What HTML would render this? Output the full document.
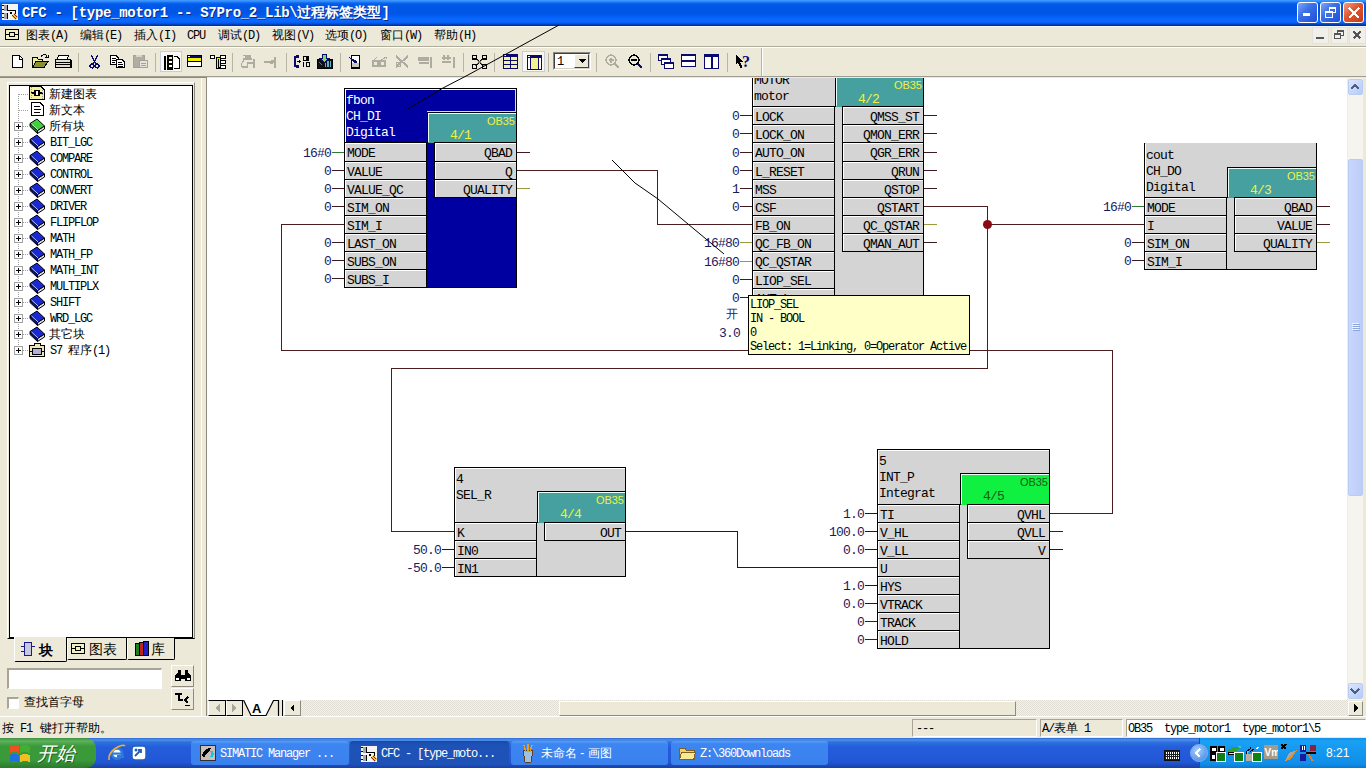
<!DOCTYPE html><html><head><meta charset="utf-8"><style>
*{margin:0;padding:0;box-sizing:border-box}
html,body{width:1366px;height:768px;overflow:hidden;background:#ECE9D8;position:relative}
div{position:absolute}
.m13{font-family:"Liberation Mono",monospace;font-size:13px;line-height:13px;letter-spacing:-0.8px;white-space:pre;color:#000}
.m11{font-family:"Liberation Mono",monospace;font-size:11px;line-height:12px;letter-spacing:-0.6px;white-space:pre;color:#000}
.s12{font-family:"Liberation Sans",sans-serif;font-size:12px;line-height:12px;white-space:pre;color:#000}
.m12{font-family:"Liberation Mono",monospace;font-size:12px;line-height:12px;letter-spacing:-1.2px;white-space:pre;color:#000}
.s11{font-family:"Liberation Sans",sans-serif;font-size:11px;line-height:11px;white-space:pre;color:#000}
</style></head><body>
<div style="left:0;top:0;width:1366px;height:26px;background:linear-gradient(to bottom,#3D95FF 0px,#3D95FF 1px,#0A66EE 3px,#0058E6 5px,#0055E5 13px,#005DF2 16px,#0A68FF 19px,#0A64FC 22px,#0050D8 24px,#003399 25px,#003399 26px)"></div>
<svg style="position:absolute;left:2px;top:4px;" width="16" height="16" viewBox="0 0 16 16" shape-rendering="crispEdges"><rect x="0" y="0" width="16" height="16" fill="#F4F4F0"/><rect x="2" y="1" width="4" height="6" fill="#A8A4B0"/><rect x="2" y="9" width="4" height="6" fill="#A8A4B0"/><path d="M0 1.5 H2 M0 5.5 H2 M0 9.5 H2 M0 13.5 H2" stroke="#000"/><path d="M5.5 1 V6.5 H13.5 V12 M5.5 9 V15" stroke="#000" fill="none"/><path d="M7 7.5 H11 L9 11 Z" fill="#000"/><path d="M9 12 L12 9 L16 13 L13 16 Z" fill="#E8C850"/><path d="M10.5 11.5 L14 15 M12 10 L15.5 13.5" stroke="#8A2000" stroke-width="1.2"/></svg>
<div style="left:22px;top:5px;font-family:'Liberation Mono',monospace;font-weight:bold;font-size:14px;line-height:14px;letter-spacing:-0.3px;color:#fff;white-space:pre;text-shadow:1px 1px 0 #0a2a8a">CFC - [type_motor1 -- S7Pro_2_Lib\<span style="font-family:'Liberation Sans',sans-serif;letter-spacing:0">过程标签类型</span>]</div>
<div style="left:1297px;top:2px;width:21px;height:21px;border:1px solid #fff;border-radius:3px;background:linear-gradient(135deg,#7FA6F8 0%,#3C71E8 40%,#1F4FD8 100%)"></div>
<div style="left:1320px;top:2px;width:21px;height:21px;border:1px solid #fff;border-radius:3px;background:linear-gradient(135deg,#7FA6F8 0%,#3C71E8 40%,#1F4FD8 100%)"></div>
<div style="left:1343px;top:2px;width:21px;height:21px;border:1px solid #fff;border-radius:3px;background:linear-gradient(135deg,#F0A080 0%,#E05530 45%,#C83A18 100%)"></div>
<svg style="position:absolute;left:1303px;top:13px;" width="9" height="4" viewBox="0 0 9 4" shape-rendering="crispEdges"><rect x="0" y="0" width="7" height="3" fill="#fff"/></svg>
<svg style="position:absolute;left:1325px;top:7px;" width="12" height="12" viewBox="0 0 12 12" shape-rendering="crispEdges"><rect x="4.5" y="0.5" width="6" height="5" fill="none" stroke="#fff" stroke-width="1"/><rect x="4" y="0" width="7" height="2" fill="#fff"/><rect x="0.5" y="4.5" width="7" height="6" fill="#3C71E8" stroke="#fff" stroke-width="1"/><rect x="0" y="4" width="8" height="2" fill="#fff"/></svg>
<svg style="position:absolute;left:1347px;top:6px;" width="14" height="14" viewBox="0 0 14 14" shape-rendering="crispEdges"><path d="M2 2 L12 12 M12 2 L2 12" stroke="#fff" stroke-width="2.2"/></svg>
<div style="position:absolute;left:0px;top:26px;width:1366px;height:1px;background:#F4F6FF"></div>
<div style="position:absolute;left:0px;top:46px;width:1366px;height:1px;background:#B0AC9C"></div>
<div style="position:absolute;left:0px;top:47px;width:1366px;height:1px;background:#fff"></div>
<svg style="position:absolute;left:5px;top:29px;" width="15" height="12" viewBox="0 0 15 12" shape-rendering="crispEdges"><rect x="0.5" y="0.5" width="13" height="10" fill="#F0F0C0" stroke="#000"/><rect x="4.5" y="3.5" width="5" height="4" fill="none" stroke="#000"/><path d="M1 5.5 H4 M10 5.5 H13" stroke="#000"/></svg>
<div class="s12" style="left:26px;top:29px">图表</div>
<div class="m12" style="left:50px;top:30px">(A)</div>
<div class="s12" style="left:80px;top:29px">编辑</div>
<div class="m12" style="left:104px;top:30px">(E)</div>
<div class="s12" style="left:134px;top:29px">插入</div>
<div class="m12" style="left:158px;top:30px">(I)</div>
<div class="m12" style="left:187px;top:30px">CPU</div>
<div class="s12" style="left:218px;top:29px">调试</div>
<div class="m12" style="left:242px;top:30px">(D)</div>
<div class="s12" style="left:272px;top:29px">视图</div>
<div class="m12" style="left:296px;top:30px">(V)</div>
<div class="s12" style="left:325px;top:29px">选项</div>
<div class="m12" style="left:349px;top:30px">(O)</div>
<div class="s12" style="left:380px;top:29px">窗口</div>
<div class="m12" style="left:404px;top:30px">(W)</div>
<div class="s12" style="left:434px;top:29px">帮助</div>
<div class="m12" style="left:458px;top:30px">(H)</div>
<div style="position:absolute;left:1312px;top:27px;width:17px;height:17px;background:#F0EFEA;border:1px solid #E4E2D8"></div>
<div style="position:absolute;left:1331px;top:27px;width:17px;height:17px;background:#F0EFEA;border:1px solid #E4E2D8"></div>
<div style="position:absolute;left:1349px;top:27px;width:17px;height:17px;background:#F0EFEA;border:1px solid #E4E2D8"></div>
<div style="position:absolute;left:1316px;top:37px;width:8px;height:2px;background:#555"></div>
<svg style="position:absolute;left:1334px;top:30px;" width="11" height="11" viewBox="0 0 11 11" shape-rendering="crispEdges"><rect x="3.5" y="0.5" width="6" height="5" fill="none" stroke="#555"/><rect x="3" y="0" width="7" height="2" fill="#555"/><rect x="0.5" y="3.5" width="6" height="5" fill="#F0EFEA" stroke="#555"/><rect x="0" y="3" width="7" height="2" fill="#555"/></svg>
<svg style="position:absolute;left:1352px;top:30px;" width="11" height="11" viewBox="0 0 11 11" shape-rendering="crispEdges"><path d="M1.5 1.5 L8.5 8.5 M8.5 1.5 L1.5 8.5" stroke="#555" stroke-width="2"/></svg>
<div style="position:absolute;left:761px;top:48px;width:1px;height:28px;background:#B8B5A6"></div>
<div style="position:absolute;left:762px;top:48px;width:1px;height:28px;background:#fff"></div>
<div style="position:absolute;left:0px;top:76px;width:1366px;height:1px;background:#A09D90"></div>
<div style="position:absolute;left:0px;top:77px;width:207px;height:1px;background:#8E8B7E"></div>
<div style="position:absolute;left:160px;top:51px;width:22px;height:21px;background:#F8F7F2;border:1px solid #C6CCD8"></div>
<div style="position:absolute;left:522px;top:51px;width:23px;height:21px;background:#F8F7F2;border:1px solid #C6CCD8"></div>
<svg style="position:absolute;left:12px;top:55px;" width="11" height="13" viewBox="0 0 11 13" shape-rendering="crispEdges"><path d="M0.5 0.5 H7 L10.5 4 V12.5 H0.5 Z" fill="#fff" stroke="#000"/><path d="M7 0.5 V4 H10.5" fill="#fff" stroke="#000"/></svg>
<svg style="position:absolute;left:32px;top:54px;" width="17" height="14" viewBox="0 0 17 14" shape-rendering="crispEdges"><path d="M0.5 3.5 H5 L6 5 H10.5 V13.5 H0.5 Z" fill="#F4F098" stroke="#000"/><path d="M0.5 13.5 L4 7.5 H16 L12 13.5 Z" fill="#8C9030" stroke="#000"/><path d="M9 2.5 Q11 0 14 1 L15 3" fill="none" stroke="#000"/><path d="M13 3.5 H16 V1" fill="none" stroke="#000"/></svg>
<svg style="position:absolute;left:55px;top:55px;" width="17" height="14" viewBox="0 0 17 14" shape-rendering="crispEdges"><path d="M3.5 0.5 H13.5 L12 4.5 H2 Z" fill="#fff" stroke="#000"/><rect x="0.5" y="4.5" width="15" height="8" fill="#E0DED0" stroke="#000"/><path d="M1 7.5 H15 M1 9.5 H15" stroke="#000"/><rect x="2" y="8" width="10" height="1" fill="#F0E890"/><path d="M15.5 5 L16.5 6 V12 L15.5 13" stroke="#000" fill="none"/></svg>
<div style="position:absolute;left:78px;top:53px;width:1px;height:19px;background:#B8B5A6"></div>
<svg style="position:absolute;left:89px;top:55px;" width="11" height="14" viewBox="0 0 11 14" shape-rendering="crispEdges"><path d="M2 0 L7 9 M9 0 L4 9" stroke="#0A0A6E" stroke-width="1.2"/><circle cx="3" cy="11" r="2" fill="none" stroke="#0A0A6E" stroke-width="1.2"/><circle cx="8" cy="11" r="2" fill="none" stroke="#0A0A6E" stroke-width="1.2"/></svg>
<svg style="position:absolute;left:110px;top:55px;" width="16" height="13" viewBox="0 0 16 13" shape-rendering="crispEdges"><path d="M0.5 0.5 H6 L8.5 3 V9.5 H0.5 Z" fill="#fff" stroke="#000"/><path d="M2 3.5 H6 M2 5.5 H6 M2 7.5 H5" stroke="#000"/><path d="M6.5 4.5 H12 L14.5 7 V12.5 H6.5 Z" fill="#fff" stroke="#000" stroke-width="1.2"/><path d="M8 7.5 H12 M8 9.5 H13 M8 11 H13" stroke="#000"/></svg>
<svg style="position:absolute;left:133px;top:54px;" width="16" height="14" viewBox="0 0 16 14" shape-rendering="crispEdges"><rect x="0.5" y="1.5" width="11" height="12" rx="1" fill="#B0AEA2" stroke="#A4A296"/><rect x="3" y="0.5" width="6" height="2" fill="#D8D6CC"/><rect x="6.5" y="6.5" width="8" height="7" fill="#E6E4DA" stroke="#A4A296"/><path d="M8 9.5 H13 M8 11.5 H13" stroke="#A4A296"/></svg>
<div style="position:absolute;left:155px;top:53px;width:1px;height:19px;background:#B8B5A6"></div>
<svg style="position:absolute;left:164px;top:55px;" width="17" height="15" viewBox="0 0 17 15" shape-rendering="crispEdges"><rect x="0" y="0.5" width="2" height="14" fill="#000"/><rect x="3" y="0" width="6" height="15" fill="#000"/><rect x="4.5" y="2" width="3" height="2" fill="#E8F0A0"/><rect x="4.5" y="6" width="3" height="2" fill="#fff"/><rect x="4.5" y="10" width="3" height="2" fill="#fff"/><path d="M9.5 1.5 H13 L15.5 4 V13.5 H9.5" fill="#fff" stroke="#000"/></svg>
<svg style="position:absolute;left:187px;top:55px;" width="15" height="12" viewBox="0 0 15 12" shape-rendering="crispEdges"><rect x="0.5" y="0.5" width="14" height="11" fill="#fff" stroke="#000"/><rect x="1" y="1" width="13" height="2" fill="#0A0A6E"/><rect x="1" y="1" width="2" height="1" fill="#fff"/><rect x="1" y="3" width="13" height="3" fill="#F0F000"/><rect x="1" y="6" width="13" height="1" fill="#000"/></svg>
<svg style="position:absolute;left:210px;top:55px;" width="16" height="14" viewBox="0 0 16 14" shape-rendering="crispEdges"><rect x="0.5" y="0.5" width="4" height="3" fill="#fff" stroke="#000"/><rect x="6" y="2" width="4" height="11" fill="#F0F000" stroke="#000"/><path d="M8 4 V12 H10" stroke="#000" fill="none"/><rect x="10.5" y="0.5" width="5" height="3" fill="#fff" stroke="#000"/><rect x="10.5" y="5.5" width="5" height="3" fill="#fff" stroke="#000"/><rect x="10.5" y="10.5" width="5" height="3" fill="#fff" stroke="#000"/></svg>
<div style="position:absolute;left:232px;top:53px;width:1px;height:19px;background:#B8B5A6"></div>
<svg style="position:absolute;left:240px;top:54px;" width="16" height="14" viewBox="0 0 16 14" shape-rendering="crispEdges"><path d="M3 1.5 H10 L11 5 H4 L3 8 Q0 10 2 13 H7 L8 9 H14 M14 5 V14" fill="none" stroke="#AEACA0" stroke-width="1.3"/><path d="M5 3 H10" stroke="#AEACA0" stroke-width="2"/></svg>
<svg style="position:absolute;left:264px;top:56px;" width="14" height="12" viewBox="0 0 14 12" shape-rendering="crispEdges"><path d="M0 6 H8 M11 0.5 V12" stroke="#AEACA0" stroke-width="2"/><circle cx="8" cy="6" r="2" fill="#AEACA0"/></svg>
<div style="position:absolute;left:286px;top:53px;width:1px;height:19px;background:#B8B5A6"></div>
<svg style="position:absolute;left:294px;top:55px;" width="17" height="13" viewBox="0 0 17 13" shape-rendering="crispEdges"><path d="M5 1.5 H3 Q1 1.5 1 4 V9 Q1 11.5 3 11.5 H5" fill="none" stroke="#0A0A6E" stroke-width="2.4"/><path d="M3 6.5 H6" stroke="#000" stroke-width="1.5"/><path d="M5 4.5 L7 6.5 L5 8.5 Z" fill="#000"/><rect x="9" y="1" width="3" height="4" fill="none" stroke="#000" stroke-width="1"/><path d="M14 1 V5.5" stroke="#000" stroke-width="1.2"/><path d="M9.5 7 V11.5" stroke="#000" stroke-width="1.2"/><rect x="12" y="7.5" width="3" height="4" fill="none" stroke="#000" stroke-width="1"/></svg>
<svg style="position:absolute;left:317px;top:54px;" width="17" height="15" viewBox="0 0 17 15" shape-rendering="crispEdges"><rect x="0.5" y="5.5" width="15" height="8.5" fill="#101018" stroke="#000"/><path d="M8.5 7 V13 M11 7 V13 M13.5 7 V13" stroke="#60B0D0" stroke-width="1.2"/><path d="M2 8 L5 11" stroke="#6080A0"/><path d="M5.5 0.5 H9.5 V4.5 H12 L7.5 9 L3 4.5 H5.5 Z" fill="#80E040" stroke="#0A0A6E"/></svg>
<div style="position:absolute;left:340px;top:53px;width:1px;height:19px;background:#B8B5A6"></div>
<svg style="position:absolute;left:349px;top:55px;" width="12" height="14" viewBox="0 0 12 14" shape-rendering="crispEdges"><rect x="2.5" y="0.5" width="8" height="12.5" fill="#fff" stroke="#000" stroke-width="1.2"/><path d="M0 2 L8 6 L8 9 L4 7 Z" fill="#0A0A6E"/><rect x="3" y="8" width="7" height="4" fill="#C8C8C0"/></svg>
<svg style="position:absolute;left:372px;top:56px;" width="16" height="11" viewBox="0 0 16 11" shape-rendering="crispEdges"><rect x="1" y="5" width="5" height="5" fill="none" stroke="#AEACA0" stroke-width="1.2"/><rect x="8" y="5" width="5" height="5" fill="none" stroke="#AEACA0" stroke-width="1.2"/><path d="M1 5 L5 1 M8 5 L14 1 L15 3" fill="none" stroke="#AEACA0" stroke-width="1.2"/></svg>
<svg style="position:absolute;left:395px;top:55px;" width="15" height="13" viewBox="0 0 15 13" shape-rendering="crispEdges"><path d="M1 1 L13 12 M13 1 L1 12" stroke="#AEACA0" stroke-width="2"/><rect x="1" y="7" width="4" height="4" fill="none" stroke="#AEACA0"/></svg>
<svg style="position:absolute;left:418px;top:56px;" width="15" height="13" viewBox="0 0 15 13" shape-rendering="crispEdges"><rect x="0" y="1" width="11" height="4" fill="#AEACA0"/><rect x="1" y="6" width="10" height="1.5" fill="#AEACA0"/><rect x="12" y="1" width="2" height="11" fill="#AEACA0"/></svg>
<svg style="position:absolute;left:441px;top:54px;" width="16" height="14" viewBox="0 0 16 14" shape-rendering="crispEdges"><path d="M1 4 H10 M3 1 V6 M7 1 V6" stroke="#AEACA0" stroke-width="2"/><rect x="1" y="7" width="9" height="2" fill="#AEACA0"/><rect x="12" y="3" width="2" height="11" fill="#AEACA0"/></svg>
<div style="position:absolute;left:463px;top:53px;width:1px;height:19px;background:#B8B5A6"></div>
<svg style="position:absolute;left:472px;top:55px;" width="15" height="14" viewBox="0 0 15 14" shape-rendering="crispEdges"><path d="M3 3 L12 11 M12 3 L3 11" stroke="#000" stroke-width="1.2"/><path d="M3 3 L12 11 M12 3 L3 11" stroke="#F0F0C0" stroke-width="0.5"/><rect x="0.5" y="0.5" width="4" height="3.5" fill="none" stroke="#000" stroke-width="1.2"/><rect x="10.5" y="0.5" width="4" height="3.5" fill="none" stroke="#000" stroke-width="1.2"/><rect x="0.5" y="9.5" width="4" height="4" fill="none" stroke="#000" stroke-width="1.2"/><rect x="10.5" y="9.5" width="4" height="4" fill="none" stroke="#000" stroke-width="1.2"/></svg>
<div style="position:absolute;left:494px;top:53px;width:1px;height:19px;background:#B8B5A6"></div>
<svg style="position:absolute;left:503px;top:54px;" width="15" height="15" viewBox="0 0 15 15" shape-rendering="crispEdges"><rect x="0.5" y="0.5" width="14" height="14" fill="#F4F498" stroke="#0A0A6E"/><rect x="0" y="0" width="15" height="3" fill="#0A0A6E"/><rect x="1" y="1" width="2" height="1" fill="#fff"/><path d="M7.5 3 V15 M0 6.5 H15 M0 10.5 H15" stroke="#0A0A6E"/></svg>
<svg style="position:absolute;left:527px;top:55px;" width="16" height="15" viewBox="0 0 16 15" shape-rendering="crispEdges"><rect x="0.5" y="0.5" width="14" height="14" fill="#fff" stroke="#0A0A6E"/><rect x="0" y="0" width="15" height="3" fill="#0A0A6E"/><rect x="1" y="1" width="2" height="1" fill="#fff"/><rect x="4" y="3" width="7" height="11" fill="#F4F090"/><path d="M3.5 3 V15 M11.5 3 V15" stroke="#0A0A6E"/></svg>
<div style="position:absolute;left:548px;top:53px;width:1px;height:19px;background:#B8B5A6"></div>
<div style="position:absolute;left:553px;top:52px;width:38px;height:18px;background:#fff;border:1px solid #fff;border-top-color:#8C8A7E;border-left-color:#8C8A7E"></div>
<div style="position:absolute;left:554px;top:53px;width:36px;height:16px;border:1px solid #D4D0C8;border-top-color:#404040;border-left-color:#404040"></div>
<div class="m12" style="left:557px;top:56px">1</div>
<div style="position:absolute;left:574px;top:54px;width:15px;height:14px;background:#ECE9D8;border:1px solid #fff;border-right-color:#404040;border-bottom-color:#404040"></div>
<svg style="position:absolute;left:578px;top:59px;" width="8" height="4" viewBox="0 0 8 4" shape-rendering="crispEdges"><path d="M0 0 H8 L4 4 Z" fill="#000"/></svg>
<div style="position:absolute;left:596px;top:53px;width:1px;height:19px;background:#B8B5A6"></div>
<svg style="position:absolute;left:605px;top:54px;" width="15" height="15" viewBox="0 0 15 15" shape-rendering="crispEdges"><circle cx="6" cy="6" r="5" fill="none" stroke="#AEACA0" stroke-width="1.4"/><path d="M3.5 6 H8.5 M6 3.5 V8.5" stroke="#AEACA0" stroke-width="1.8"/><path d="M10 10 L14 14" stroke="#AEACA0" stroke-width="2.4"/></svg>
<svg style="position:absolute;left:628px;top:54px;" width="15" height="15" viewBox="0 0 15 15" shape-rendering="crispEdges"><circle cx="6" cy="6" r="5" fill="none" stroke="#000" stroke-width="1.4"/><path d="M3 6 H9" stroke="#000" stroke-width="2"/><path d="M10 10 L14 14" stroke="#0A0A6E" stroke-width="2.6"/></svg>
<div style="position:absolute;left:650px;top:53px;width:1px;height:19px;background:#B8B5A6"></div>
<svg style="position:absolute;left:658px;top:54px;" width="17" height="15" viewBox="0 0 17 15" shape-rendering="crispEdges"><rect x="0.5" y="0.5" width="9" height="6" fill="#fff" stroke="#0A0A6E"/><rect x="0" y="0" width="10" height="2" fill="#0A0A6E"/><rect x="3.5" y="4.5" width="9" height="6" fill="#fff" stroke="#0A0A6E"/><rect x="3" y="4" width="10" height="2" fill="#0A0A6E"/><rect x="6.5" y="8.5" width="9" height="6" fill="#fff" stroke="#0A0A6E"/><rect x="6" y="8" width="10" height="2" fill="#0A0A6E"/></svg>
<svg style="position:absolute;left:681px;top:54px;" width="15" height="13" viewBox="0 0 15 13" shape-rendering="crispEdges"><rect x="0.5" y="0.5" width="14" height="12" fill="#fff" stroke="#0A0A6E"/><rect x="0" y="0" width="15" height="2" fill="#0A0A6E"/><rect x="0" y="6" width="15" height="2" fill="#0A0A6E"/></svg>
<svg style="position:absolute;left:704px;top:54px;" width="15" height="15" viewBox="0 0 15 15" shape-rendering="crispEdges"><rect x="0.5" y="0.5" width="14" height="14" fill="#fff" stroke="#0A0A6E"/><rect x="0" y="0" width="15" height="3" fill="#0A0A6E"/><rect x="7" y="3" width="1.5" height="12" fill="#0A0A6E"/></svg>
<div style="position:absolute;left:727px;top:53px;width:1px;height:19px;background:#B8B5A6"></div>
<svg style="position:absolute;left:735px;top:54px;" width="17" height="16" viewBox="0 0 17 16" shape-rendering="crispEdges"><path d="M0.5 0.5 V11 L3 8.5 L5.5 14 L7.5 13 L5 7.5 H8.5 Z" fill="#000"/><text x="7" y="13" font-family="Liberation Serif" font-weight="bold" font-size="16" fill="#0A0A6E">?</text></svg>
<div style="position:absolute;left:7px;top:82px;width:188px;height:557px;border:1px solid #fff;border-right-color:#8E8B7E;border-bottom-color:#000"></div>
<div style="position:absolute;left:9px;top:85px;width:184px;height:553px;background:#fff;border:1px solid #000;border-right-color:#000;border-bottom-color:#000"></div>
<div style="left:18px;top:94px;width:1px;height:256px;background:repeating-linear-gradient(to bottom,#A0A0A0 0 1px,transparent 1px 2px)"></div>
<div style="left:19px;top:94px;width:10px;height:1px;background:repeating-linear-gradient(to right,#A0A0A0 0 1px,transparent 1px 2px)"></div>
<svg style="position:absolute;left:29px;top:86px;" width="17" height="15" viewBox="0 0 17 15" shape-rendering="crispEdges"><path d="M0.5 0.5 H12 L15.5 4 V13.5 H0.5 Z" fill="#F4F0A0" stroke="#000" stroke-width="1.2"/><rect x="6" y="4.5" width="4" height="5" fill="#fff" stroke="#000" stroke-width="1.2"/><path d="M2 7 H6 M10 7 H14" stroke="#000" stroke-width="1.2"/><path d="M2.5 1 V13 M13.5 4 V13" stroke="#999" stroke-dasharray="1 1"/></svg>
<div class="s12" style="left:49px;top:88px">新建图表</div>
<div style="left:19px;top:110px;width:10px;height:1px;background:repeating-linear-gradient(to right,#A0A0A0 0 1px,transparent 1px 2px)"></div>
<svg style="position:absolute;left:31px;top:102px;" width="14" height="15" viewBox="0 0 14 15" shape-rendering="crispEdges"><path d="M0.5 0.5 H9 L12.5 4 V13.5 H0.5 Z" fill="#fff" stroke="#000"/><path d="M3 4.5 H9 M3 7.5 H10 M3 10.5 H9" stroke="#000"/></svg>
<div class="s12" style="left:49px;top:104px">新文本</div>
<div style="left:19px;top:126px;width:10px;height:1px;background:repeating-linear-gradient(to right,#A0A0A0 0 1px,transparent 1px 2px)"></div>
<div style="position:absolute;left:14px;top:122px;width:9px;height:9px;background:#fff;border:1px solid #A0A0A0"></div>
<div style="position:absolute;left:16px;top:126px;width:5px;height:1px;background:#000"></div>
<div style="position:absolute;left:18px;top:124px;width:1px;height:5px;background:#000"></div>
<svg style="position:absolute;left:29px;top:118px;" width="17" height="17" viewBox="0 0 17 17" shape-rendering="crispEdges"><g shape-rendering="auto"><path d="M1 5.5 L8.5 12.5 L8.5 15.5 L1 8.5 Z" fill="#208020" stroke="#000"/><path d="M8.5 12.5 L15.5 8 L15.5 11 L8.5 15.5 Z" fill="#E0E0E8" stroke="#000"/><path d="M1 5.5 L8 1 L15.5 8 L8.5 12.5 Z" fill="#40D040" stroke="#000"/><path d="M2.5 6 L9 12" stroke="#C0FFC0"/></g></svg>
<div class="s12" style="left:49px;top:120px">所有块</div>
<div style="left:19px;top:142px;width:10px;height:1px;background:repeating-linear-gradient(to right,#A0A0A0 0 1px,transparent 1px 2px)"></div>
<div style="position:absolute;left:14px;top:138px;width:9px;height:9px;background:#fff;border:1px solid #A0A0A0"></div>
<div style="position:absolute;left:16px;top:142px;width:5px;height:1px;background:#000"></div>
<div style="position:absolute;left:18px;top:140px;width:1px;height:5px;background:#000"></div>
<svg style="position:absolute;left:29px;top:134px;" width="17" height="17" viewBox="0 0 17 17" shape-rendering="crispEdges"><g shape-rendering="auto"><path d="M1 5.5 L8.5 12.5 L8.5 15.5 L1 8.5 Z" fill="#0010A0" stroke="#000"/><path d="M8.5 12.5 L15.5 8 L15.5 11 L8.5 15.5 Z" fill="#E0E0E8" stroke="#000"/><path d="M1 5.5 L8 1 L15.5 8 L8.5 12.5 Z" fill="#1A28D8" stroke="#000"/><path d="M2.5 6 L9 12" stroke="#C0C8FF"/></g></svg>
<div class="m12" style="left:50px;top:137px">BIT_LGC</div>
<div style="left:19px;top:158px;width:10px;height:1px;background:repeating-linear-gradient(to right,#A0A0A0 0 1px,transparent 1px 2px)"></div>
<div style="position:absolute;left:14px;top:154px;width:9px;height:9px;background:#fff;border:1px solid #A0A0A0"></div>
<div style="position:absolute;left:16px;top:158px;width:5px;height:1px;background:#000"></div>
<div style="position:absolute;left:18px;top:156px;width:1px;height:5px;background:#000"></div>
<svg style="position:absolute;left:29px;top:150px;" width="17" height="17" viewBox="0 0 17 17" shape-rendering="crispEdges"><g shape-rendering="auto"><path d="M1 5.5 L8.5 12.5 L8.5 15.5 L1 8.5 Z" fill="#0010A0" stroke="#000"/><path d="M8.5 12.5 L15.5 8 L15.5 11 L8.5 15.5 Z" fill="#E0E0E8" stroke="#000"/><path d="M1 5.5 L8 1 L15.5 8 L8.5 12.5 Z" fill="#1A28D8" stroke="#000"/><path d="M2.5 6 L9 12" stroke="#C0C8FF"/></g></svg>
<div class="m12" style="left:50px;top:153px">COMPARE</div>
<div style="left:19px;top:174px;width:10px;height:1px;background:repeating-linear-gradient(to right,#A0A0A0 0 1px,transparent 1px 2px)"></div>
<div style="position:absolute;left:14px;top:170px;width:9px;height:9px;background:#fff;border:1px solid #A0A0A0"></div>
<div style="position:absolute;left:16px;top:174px;width:5px;height:1px;background:#000"></div>
<div style="position:absolute;left:18px;top:172px;width:1px;height:5px;background:#000"></div>
<svg style="position:absolute;left:29px;top:166px;" width="17" height="17" viewBox="0 0 17 17" shape-rendering="crispEdges"><g shape-rendering="auto"><path d="M1 5.5 L8.5 12.5 L8.5 15.5 L1 8.5 Z" fill="#0010A0" stroke="#000"/><path d="M8.5 12.5 L15.5 8 L15.5 11 L8.5 15.5 Z" fill="#E0E0E8" stroke="#000"/><path d="M1 5.5 L8 1 L15.5 8 L8.5 12.5 Z" fill="#1A28D8" stroke="#000"/><path d="M2.5 6 L9 12" stroke="#C0C8FF"/></g></svg>
<div class="m12" style="left:50px;top:169px">CONTROL</div>
<div style="left:19px;top:190px;width:10px;height:1px;background:repeating-linear-gradient(to right,#A0A0A0 0 1px,transparent 1px 2px)"></div>
<div style="position:absolute;left:14px;top:186px;width:9px;height:9px;background:#fff;border:1px solid #A0A0A0"></div>
<div style="position:absolute;left:16px;top:190px;width:5px;height:1px;background:#000"></div>
<div style="position:absolute;left:18px;top:188px;width:1px;height:5px;background:#000"></div>
<svg style="position:absolute;left:29px;top:182px;" width="17" height="17" viewBox="0 0 17 17" shape-rendering="crispEdges"><g shape-rendering="auto"><path d="M1 5.5 L8.5 12.5 L8.5 15.5 L1 8.5 Z" fill="#0010A0" stroke="#000"/><path d="M8.5 12.5 L15.5 8 L15.5 11 L8.5 15.5 Z" fill="#E0E0E8" stroke="#000"/><path d="M1 5.5 L8 1 L15.5 8 L8.5 12.5 Z" fill="#1A28D8" stroke="#000"/><path d="M2.5 6 L9 12" stroke="#C0C8FF"/></g></svg>
<div class="m12" style="left:50px;top:185px">CONVERT</div>
<div style="left:19px;top:206px;width:10px;height:1px;background:repeating-linear-gradient(to right,#A0A0A0 0 1px,transparent 1px 2px)"></div>
<div style="position:absolute;left:14px;top:202px;width:9px;height:9px;background:#fff;border:1px solid #A0A0A0"></div>
<div style="position:absolute;left:16px;top:206px;width:5px;height:1px;background:#000"></div>
<div style="position:absolute;left:18px;top:204px;width:1px;height:5px;background:#000"></div>
<svg style="position:absolute;left:29px;top:198px;" width="17" height="17" viewBox="0 0 17 17" shape-rendering="crispEdges"><g shape-rendering="auto"><path d="M1 5.5 L8.5 12.5 L8.5 15.5 L1 8.5 Z" fill="#0010A0" stroke="#000"/><path d="M8.5 12.5 L15.5 8 L15.5 11 L8.5 15.5 Z" fill="#E0E0E8" stroke="#000"/><path d="M1 5.5 L8 1 L15.5 8 L8.5 12.5 Z" fill="#1A28D8" stroke="#000"/><path d="M2.5 6 L9 12" stroke="#C0C8FF"/></g></svg>
<div class="m12" style="left:50px;top:201px">DRIVER</div>
<div style="left:19px;top:222px;width:10px;height:1px;background:repeating-linear-gradient(to right,#A0A0A0 0 1px,transparent 1px 2px)"></div>
<div style="position:absolute;left:14px;top:218px;width:9px;height:9px;background:#fff;border:1px solid #A0A0A0"></div>
<div style="position:absolute;left:16px;top:222px;width:5px;height:1px;background:#000"></div>
<div style="position:absolute;left:18px;top:220px;width:1px;height:5px;background:#000"></div>
<svg style="position:absolute;left:29px;top:214px;" width="17" height="17" viewBox="0 0 17 17" shape-rendering="crispEdges"><g shape-rendering="auto"><path d="M1 5.5 L8.5 12.5 L8.5 15.5 L1 8.5 Z" fill="#0010A0" stroke="#000"/><path d="M8.5 12.5 L15.5 8 L15.5 11 L8.5 15.5 Z" fill="#E0E0E8" stroke="#000"/><path d="M1 5.5 L8 1 L15.5 8 L8.5 12.5 Z" fill="#1A28D8" stroke="#000"/><path d="M2.5 6 L9 12" stroke="#C0C8FF"/></g></svg>
<div class="m12" style="left:50px;top:217px">FLIPFLOP</div>
<div style="left:19px;top:238px;width:10px;height:1px;background:repeating-linear-gradient(to right,#A0A0A0 0 1px,transparent 1px 2px)"></div>
<div style="position:absolute;left:14px;top:234px;width:9px;height:9px;background:#fff;border:1px solid #A0A0A0"></div>
<div style="position:absolute;left:16px;top:238px;width:5px;height:1px;background:#000"></div>
<div style="position:absolute;left:18px;top:236px;width:1px;height:5px;background:#000"></div>
<svg style="position:absolute;left:29px;top:230px;" width="17" height="17" viewBox="0 0 17 17" shape-rendering="crispEdges"><g shape-rendering="auto"><path d="M1 5.5 L8.5 12.5 L8.5 15.5 L1 8.5 Z" fill="#0010A0" stroke="#000"/><path d="M8.5 12.5 L15.5 8 L15.5 11 L8.5 15.5 Z" fill="#E0E0E8" stroke="#000"/><path d="M1 5.5 L8 1 L15.5 8 L8.5 12.5 Z" fill="#1A28D8" stroke="#000"/><path d="M2.5 6 L9 12" stroke="#C0C8FF"/></g></svg>
<div class="m12" style="left:50px;top:233px">MATH</div>
<div style="left:19px;top:254px;width:10px;height:1px;background:repeating-linear-gradient(to right,#A0A0A0 0 1px,transparent 1px 2px)"></div>
<div style="position:absolute;left:14px;top:250px;width:9px;height:9px;background:#fff;border:1px solid #A0A0A0"></div>
<div style="position:absolute;left:16px;top:254px;width:5px;height:1px;background:#000"></div>
<div style="position:absolute;left:18px;top:252px;width:1px;height:5px;background:#000"></div>
<svg style="position:absolute;left:29px;top:246px;" width="17" height="17" viewBox="0 0 17 17" shape-rendering="crispEdges"><g shape-rendering="auto"><path d="M1 5.5 L8.5 12.5 L8.5 15.5 L1 8.5 Z" fill="#0010A0" stroke="#000"/><path d="M8.5 12.5 L15.5 8 L15.5 11 L8.5 15.5 Z" fill="#E0E0E8" stroke="#000"/><path d="M1 5.5 L8 1 L15.5 8 L8.5 12.5 Z" fill="#1A28D8" stroke="#000"/><path d="M2.5 6 L9 12" stroke="#C0C8FF"/></g></svg>
<div class="m12" style="left:50px;top:249px">MATH_FP</div>
<div style="left:19px;top:270px;width:10px;height:1px;background:repeating-linear-gradient(to right,#A0A0A0 0 1px,transparent 1px 2px)"></div>
<div style="position:absolute;left:14px;top:266px;width:9px;height:9px;background:#fff;border:1px solid #A0A0A0"></div>
<div style="position:absolute;left:16px;top:270px;width:5px;height:1px;background:#000"></div>
<div style="position:absolute;left:18px;top:268px;width:1px;height:5px;background:#000"></div>
<svg style="position:absolute;left:29px;top:262px;" width="17" height="17" viewBox="0 0 17 17" shape-rendering="crispEdges"><g shape-rendering="auto"><path d="M1 5.5 L8.5 12.5 L8.5 15.5 L1 8.5 Z" fill="#0010A0" stroke="#000"/><path d="M8.5 12.5 L15.5 8 L15.5 11 L8.5 15.5 Z" fill="#E0E0E8" stroke="#000"/><path d="M1 5.5 L8 1 L15.5 8 L8.5 12.5 Z" fill="#1A28D8" stroke="#000"/><path d="M2.5 6 L9 12" stroke="#C0C8FF"/></g></svg>
<div class="m12" style="left:50px;top:265px">MATH_INT</div>
<div style="left:19px;top:286px;width:10px;height:1px;background:repeating-linear-gradient(to right,#A0A0A0 0 1px,transparent 1px 2px)"></div>
<div style="position:absolute;left:14px;top:282px;width:9px;height:9px;background:#fff;border:1px solid #A0A0A0"></div>
<div style="position:absolute;left:16px;top:286px;width:5px;height:1px;background:#000"></div>
<div style="position:absolute;left:18px;top:284px;width:1px;height:5px;background:#000"></div>
<svg style="position:absolute;left:29px;top:278px;" width="17" height="17" viewBox="0 0 17 17" shape-rendering="crispEdges"><g shape-rendering="auto"><path d="M1 5.5 L8.5 12.5 L8.5 15.5 L1 8.5 Z" fill="#0010A0" stroke="#000"/><path d="M8.5 12.5 L15.5 8 L15.5 11 L8.5 15.5 Z" fill="#E0E0E8" stroke="#000"/><path d="M1 5.5 L8 1 L15.5 8 L8.5 12.5 Z" fill="#1A28D8" stroke="#000"/><path d="M2.5 6 L9 12" stroke="#C0C8FF"/></g></svg>
<div class="m12" style="left:50px;top:281px">MULTIPLX</div>
<div style="left:19px;top:302px;width:10px;height:1px;background:repeating-linear-gradient(to right,#A0A0A0 0 1px,transparent 1px 2px)"></div>
<div style="position:absolute;left:14px;top:298px;width:9px;height:9px;background:#fff;border:1px solid #A0A0A0"></div>
<div style="position:absolute;left:16px;top:302px;width:5px;height:1px;background:#000"></div>
<div style="position:absolute;left:18px;top:300px;width:1px;height:5px;background:#000"></div>
<svg style="position:absolute;left:29px;top:294px;" width="17" height="17" viewBox="0 0 17 17" shape-rendering="crispEdges"><g shape-rendering="auto"><path d="M1 5.5 L8.5 12.5 L8.5 15.5 L1 8.5 Z" fill="#0010A0" stroke="#000"/><path d="M8.5 12.5 L15.5 8 L15.5 11 L8.5 15.5 Z" fill="#E0E0E8" stroke="#000"/><path d="M1 5.5 L8 1 L15.5 8 L8.5 12.5 Z" fill="#1A28D8" stroke="#000"/><path d="M2.5 6 L9 12" stroke="#C0C8FF"/></g></svg>
<div class="m12" style="left:50px;top:297px">SHIFT</div>
<div style="left:19px;top:318px;width:10px;height:1px;background:repeating-linear-gradient(to right,#A0A0A0 0 1px,transparent 1px 2px)"></div>
<div style="position:absolute;left:14px;top:314px;width:9px;height:9px;background:#fff;border:1px solid #A0A0A0"></div>
<div style="position:absolute;left:16px;top:318px;width:5px;height:1px;background:#000"></div>
<div style="position:absolute;left:18px;top:316px;width:1px;height:5px;background:#000"></div>
<svg style="position:absolute;left:29px;top:310px;" width="17" height="17" viewBox="0 0 17 17" shape-rendering="crispEdges"><g shape-rendering="auto"><path d="M1 5.5 L8.5 12.5 L8.5 15.5 L1 8.5 Z" fill="#0010A0" stroke="#000"/><path d="M8.5 12.5 L15.5 8 L15.5 11 L8.5 15.5 Z" fill="#E0E0E8" stroke="#000"/><path d="M1 5.5 L8 1 L15.5 8 L8.5 12.5 Z" fill="#1A28D8" stroke="#000"/><path d="M2.5 6 L9 12" stroke="#C0C8FF"/></g></svg>
<div class="m12" style="left:50px;top:313px">WRD_LGC</div>
<div style="left:19px;top:334px;width:10px;height:1px;background:repeating-linear-gradient(to right,#A0A0A0 0 1px,transparent 1px 2px)"></div>
<div style="position:absolute;left:14px;top:330px;width:9px;height:9px;background:#fff;border:1px solid #A0A0A0"></div>
<div style="position:absolute;left:16px;top:334px;width:5px;height:1px;background:#000"></div>
<div style="position:absolute;left:18px;top:332px;width:1px;height:5px;background:#000"></div>
<svg style="position:absolute;left:29px;top:326px;" width="17" height="17" viewBox="0 0 17 17" shape-rendering="crispEdges"><g shape-rendering="auto"><path d="M1 5.5 L8.5 12.5 L8.5 15.5 L1 8.5 Z" fill="#0010A0" stroke="#000"/><path d="M8.5 12.5 L15.5 8 L15.5 11 L8.5 15.5 Z" fill="#E0E0E8" stroke="#000"/><path d="M1 5.5 L8 1 L15.5 8 L8.5 12.5 Z" fill="#1A28D8" stroke="#000"/><path d="M2.5 6 L9 12" stroke="#C0C8FF"/></g></svg>
<div class="s12" style="left:49px;top:328px">其它块</div>
<div style="left:19px;top:350px;width:10px;height:1px;background:repeating-linear-gradient(to right,#A0A0A0 0 1px,transparent 1px 2px)"></div>
<div style="position:absolute;left:14px;top:346px;width:9px;height:9px;background:#fff;border:1px solid #A0A0A0"></div>
<div style="position:absolute;left:16px;top:350px;width:5px;height:1px;background:#000"></div>
<div style="position:absolute;left:18px;top:348px;width:1px;height:5px;background:#000"></div>
<svg style="position:absolute;left:29px;top:343px;" width="17" height="15" viewBox="0 0 17 15" shape-rendering="crispEdges"><path d="M0.5 2.5 H5 L6 0.5 H11 L12 2.5 H15.5 V13.5 H0.5 Z" fill="#F0E8B0" stroke="#000"/><rect x="3.5" y="5.5" width="9" height="6" fill="#B0B0D8" stroke="#000"/><path d="M1 8.5 H3.5 M12.5 8.5 H15" stroke="#000"/></svg>
<div class="m12" style="left:50px;top:345px">S7 </div><div class="s12" style="left:68px;top:344px">程序</div><div class="m12" style="left:92px;top:345px">(1)</div>
<div style="position:absolute;left:201px;top:78px;width:1px;height:639px;background:#fff"></div>
<div style="position:absolute;left:206px;top:77px;width:1px;height:640px;background:#8E8B7E"></div>
<div style="position:absolute;left:67px;top:638px;width:60px;height:22px;background:#ECE9D8;border:1px solid #000;border-top:none;border-left-color:#fff;border-radius:0 0 2px 2px"></div>
<div style="position:absolute;left:127px;top:638px;width:48px;height:22px;background:#ECE9D8;border:1px solid #000;border-top:none;border-left-color:#fff;border-radius:0 0 2px 2px"></div>
<div style="position:absolute;left:14px;top:637px;width:53px;height:25px;background:#ECE9D8;border:1px solid #000;border-top:none;border-left-color:#fff;border-radius:0 0 2px 2px"></div>
<svg style="position:absolute;left:21px;top:642px;" width="14" height="14" viewBox="0 0 14 14" shape-rendering="crispEdges"><rect x="3.5" y="0.5" width="7" height="13" fill="#C8C8E0" stroke="#1a1a8a"/><path d="M0 4.5 H3 M0 9.5 H3 M11 4.5 H14" stroke="#1a1a8a"/></svg>
<div class="s12" style="left:39px;top:643px;font-weight:bold;font-size:14px;line-height:14px">块</div>
<svg style="position:absolute;left:71px;top:643px;" width="15" height="12" viewBox="0 0 15 12" shape-rendering="crispEdges"><rect x="0.5" y="0.5" width="13" height="10" fill="#F0F0C0" stroke="#000"/><rect x="4.5" y="3.5" width="5" height="4" fill="none" stroke="#000"/><path d="M1 5.5 H4 M10 5.5 H13" stroke="#000"/></svg>
<div class="s12" style="left:89px;top:642px;font-size:14px;line-height:14px">图表</div>
<svg style="position:absolute;left:135px;top:641px;" width="14" height="15" viewBox="0 0 14 15" shape-rendering="crispEdges"><rect x="0.5" y="2.5" width="4" height="12" fill="#208020" stroke="#000"/><rect x="4.5" y="1.5" width="4" height="13" fill="#C02020" stroke="#000"/><rect x="8.5" y="0.5" width="5" height="14" fill="#2020C0" stroke="#000"/></svg>
<div class="s12" style="left:151px;top:642px;font-size:14px;line-height:14px">库</div>
<div style="position:absolute;left:7px;top:668px;width:155px;height:21px;background:#fff;border:1px solid #fff;border-top:2px solid #A8A598;border-left:2px solid #A8A598"></div>
<div style="position:absolute;left:7px;top:697px;width:12px;height:12px;background:#fff;border:1px solid #fff;border-top:2px solid #A8A598;border-left:2px solid #A8A598"></div>
<div class="s12" style="left:24px;top:696px">查找首字母</div>
<div style="position:absolute;left:171px;top:665px;width:23px;height:22px;background:#ECE9D8;border:1px solid #fff;border-right-color:#8E8B7E;border-bottom-color:#8E8B7E"></div>
<div style="position:absolute;left:171px;top:688px;width:23px;height:22px;background:#ECE9D8;border:1px solid #fff;border-right-color:#8E8B7E;border-bottom-color:#8E8B7E"></div>
<svg style="position:absolute;left:175px;top:669px;" width="16" height="13" viewBox="0 0 16 13" shape-rendering="crispEdges"><path d="M2 4 H6 V12 H0 V7 Z M10 4 H14 L16 7 V12 H10 Z" fill="#000"/><rect x="6" y="6" width="4" height="4" fill="#000"/><rect x="3" y="1" width="3" height="3" fill="#000"/><rect x="10" y="1" width="3" height="3" fill="#000"/><rect x="1" y="9" width="3" height="2" fill="#fff"/><rect x="12" y="9" width="3" height="2" fill="#fff"/></svg>
<svg style="position:absolute;left:175px;top:691px;" width="16" height="16" viewBox="0 0 16 16" shape-rendering="crispEdges"><path d="M0 2.5 H7 M3.5 2.5 V9 H8" stroke="#000" stroke-width="2" fill="none"/><path d="M13 6 L10 9 L13 12" stroke="#000" stroke-width="1.5" fill="none"/><path d="M10 14.5 H15" stroke="#000"/></svg>
<div style="left:207px;top:78px;width:1141px;height:622px;background:#fff;overflow:hidden">
<div style="left:-207px;top:-78px;width:1366px;height:768px">
<div style="position:absolute;left:517px;top:170px;width:141px;height:1px;background:#4A1E1E"></div>
<div style="position:absolute;left:657px;top:170px;width:1px;height:55px;background:#4A1E1E"></div>
<div style="position:absolute;left:657px;top:224px;width:96px;height:1px;background:#4A1E1E"></div>
<div style="position:absolute;left:924px;top:206px;width:64px;height:1px;background:#4A1E1E"></div>
<div style="position:absolute;left:987px;top:206px;width:1px;height:163px;background:#4A1E1E"></div>
<div style="position:absolute;left:987px;top:224px;width:158px;height:1px;background:#4A1E1E"></div>
<div style="position:absolute;left:391px;top:368px;width:597px;height:1px;background:#4A1E1E"></div>
<div style="position:absolute;left:391px;top:368px;width:1px;height:164px;background:#4A1E1E"></div>
<div style="position:absolute;left:391px;top:531px;width:64px;height:1px;background:#4A1E1E"></div>
<div style="position:absolute;left:1050px;top:513px;width:63px;height:1px;background:#4A1E1E"></div>
<div style="position:absolute;left:1112px;top:350px;width:1px;height:164px;background:#4A1E1E"></div>
<div style="position:absolute;left:281px;top:350px;width:832px;height:1px;background:#4A1E1E"></div>
<div style="position:absolute;left:281px;top:224px;width:1px;height:127px;background:#4A1E1E"></div>
<div style="position:absolute;left:281px;top:224px;width:64px;height:1px;background:#4A1E1E"></div>
<div style="position:absolute;left:626px;top:531px;width:112px;height:1px;background:#181840"></div>
<div style="position:absolute;left:737px;top:531px;width:1px;height:37px;background:#181840"></div>
<div style="position:absolute;left:737px;top:567px;width:141px;height:1px;background:#181840"></div>
<div style="left:983px;top:220px;width:9px;height:9px;border-radius:50%;background:#8A0A14"></div>
<div style="position:absolute;left:344px;top:88px;width:173px;height:200px;background:#0000A0;border:1px solid #000;"></div>
<div style="position:absolute;left:345px;top:89px;width:171px;height:1px;background:#fff"></div>
<div style="position:absolute;left:345px;top:89px;width:1px;height:53px;background:#fff"></div>
<div class="m13" style="left:346px;top:94px;color:#fff">fbon</div>
<div class="m13" style="left:346px;top:110px;color:#fff">CH_DI</div>
<div class="m13" style="left:346px;top:126px;color:#fff">Digital</div>
<div style="position:absolute;left:515px;top:89px;width:1px;height:23px;background:#D8D8FF"></div>
<div style="position:absolute;left:427px;top:111px;width:89px;height:1px;background:#D8D8FF"></div>
<div style="position:absolute;left:427px;top:112px;width:90px;height:31px;background:#46A0A0;border-top:1px solid #000;border-left:1px solid #000;border-right:1px solid #000"></div>
<div style="position:absolute;left:428px;top:113px;width:88px;height:1px;background:#e8fff8"></div>
<div style="position:absolute;left:428px;top:113px;width:1px;height:29px;background:#e8fff8"></div>
<div class="s11" style="left:487px;top:116px;color:#F0F040;letter-spacing:-0.1px">OB35</div>
<div class="m13" style="left:450px;top:129px;color:#F0F040">4/1</div>
<div style="position:absolute;left:344px;top:142px;width:83px;height:20px;background:#D4D4D4;border:1px solid #000"></div>
<div style="position:absolute;left:345px;top:143px;width:81px;height:1px;background:#fff"></div>
<div style="position:absolute;left:345px;top:143px;width:1px;height:18px;background:#fff"></div>
<div class="m13" style="left:347px;top:147px;">MODE</div>
<div style="position:absolute;left:344px;top:161px;width:83px;height:19px;background:#D4D4D4;border:1px solid #000"></div>
<div style="position:absolute;left:345px;top:162px;width:81px;height:1px;background:#fff"></div>
<div style="position:absolute;left:345px;top:162px;width:1px;height:17px;background:#fff"></div>
<div class="m13" style="left:347px;top:166px;">VALUE</div>
<div style="position:absolute;left:344px;top:179px;width:83px;height:19px;background:#D4D4D4;border:1px solid #000"></div>
<div style="position:absolute;left:345px;top:180px;width:81px;height:1px;background:#fff"></div>
<div style="position:absolute;left:345px;top:180px;width:1px;height:17px;background:#fff"></div>
<div class="m13" style="left:347px;top:184px;">VALUE_QC</div>
<div style="position:absolute;left:344px;top:197px;width:83px;height:19px;background:#D4D4D4;border:1px solid #000"></div>
<div style="position:absolute;left:345px;top:198px;width:81px;height:1px;background:#fff"></div>
<div style="position:absolute;left:345px;top:198px;width:1px;height:17px;background:#fff"></div>
<div class="m13" style="left:347px;top:202px;">SIM_ON</div>
<div style="position:absolute;left:344px;top:215px;width:83px;height:19px;background:#D4D4D4;border:1px solid #000"></div>
<div style="position:absolute;left:345px;top:216px;width:81px;height:1px;background:#fff"></div>
<div style="position:absolute;left:345px;top:216px;width:1px;height:17px;background:#fff"></div>
<div class="m13" style="left:347px;top:220px;">SIM_I</div>
<div style="position:absolute;left:344px;top:233px;width:83px;height:19px;background:#D4D4D4;border:1px solid #000"></div>
<div style="position:absolute;left:345px;top:234px;width:81px;height:1px;background:#fff"></div>
<div style="position:absolute;left:345px;top:234px;width:1px;height:17px;background:#fff"></div>
<div class="m13" style="left:347px;top:238px;">LAST_ON</div>
<div style="position:absolute;left:344px;top:251px;width:83px;height:19px;background:#D4D4D4;border:1px solid #000"></div>
<div style="position:absolute;left:345px;top:252px;width:81px;height:1px;background:#fff"></div>
<div style="position:absolute;left:345px;top:252px;width:1px;height:17px;background:#fff"></div>
<div class="m13" style="left:347px;top:256px;">SUBS_ON</div>
<div style="position:absolute;left:344px;top:269px;width:83px;height:19px;background:#D4D4D4;border:1px solid #000"></div>
<div style="position:absolute;left:345px;top:270px;width:81px;height:1px;background:#fff"></div>
<div style="position:absolute;left:345px;top:270px;width:1px;height:17px;background:#fff"></div>
<div class="m13" style="left:347px;top:274px;">SUBS_I</div>
<div style="position:absolute;left:434px;top:142px;width:83px;height:20px;background:#D4D4D4;border:1px solid #000"></div>
<div style="position:absolute;left:435px;top:143px;width:81px;height:1px;background:#fff"></div>
<div style="position:absolute;left:435px;top:143px;width:1px;height:18px;background:#fff"></div>
<div class="m13" style="left:484px;top:147px;">QBAD</div>
<div style="position:absolute;left:434px;top:161px;width:83px;height:19px;background:#D4D4D4;border:1px solid #000"></div>
<div style="position:absolute;left:435px;top:162px;width:81px;height:1px;background:#fff"></div>
<div style="position:absolute;left:435px;top:162px;width:1px;height:17px;background:#fff"></div>
<div class="m13" style="left:505px;top:166px;">Q</div>
<div style="position:absolute;left:434px;top:179px;width:83px;height:19px;background:#D4D4D4;border:1px solid #000"></div>
<div style="position:absolute;left:435px;top:180px;width:81px;height:1px;background:#fff"></div>
<div style="position:absolute;left:435px;top:180px;width:1px;height:17px;background:#fff"></div>
<div class="m13" style="left:463px;top:184px;">QUALITY</div>
<div style="position:absolute;left:332px;top:152px;width:12px;height:1px;background:#2E7A2E"></div>
<div class="m13" style="right:1035px;top:147px;color:#1A1A5E;text-align:right">16#0</div>
<div style="position:absolute;left:332px;top:170px;width:12px;height:1px;background:#401A1E"></div>
<div class="m13" style="right:1035px;top:165px;color:#1A1A5E;text-align:right">0</div>
<div style="position:absolute;left:332px;top:188px;width:12px;height:1px;background:#401A1E"></div>
<div class="m13" style="right:1035px;top:183px;color:#1A1A5E;text-align:right">0</div>
<div style="position:absolute;left:332px;top:206px;width:12px;height:1px;background:#401A1E"></div>
<div class="m13" style="right:1035px;top:201px;color:#1A1A5E;text-align:right">0</div>
<div style="position:absolute;left:332px;top:242px;width:12px;height:1px;background:#401A1E"></div>
<div class="m13" style="right:1035px;top:237px;color:#1A1A5E;text-align:right">0</div>
<div style="position:absolute;left:332px;top:260px;width:12px;height:1px;background:#401A1E"></div>
<div class="m13" style="right:1035px;top:255px;color:#1A1A5E;text-align:right">0</div>
<div style="position:absolute;left:332px;top:278px;width:12px;height:1px;background:#401A1E"></div>
<div class="m13" style="right:1035px;top:273px;color:#1A1A5E;text-align:right">0</div>
<div style="position:absolute;left:517px;top:152px;width:13px;height:1px;background:#401A1E"></div>
<div style="position:absolute;left:517px;top:188px;width:13px;height:1px;background:#9A9A40"></div>
<div style="position:absolute;left:752px;top:52px;width:172px;height:255px;background:#D4D4D4;border:1px solid #000;"></div>
<div style="position:absolute;left:753px;top:53px;width:170px;height:1px;background:#fff"></div>
<div style="position:absolute;left:753px;top:53px;width:1px;height:53px;background:#fff"></div>
<div class="m13" style="left:754px;top:58px;color:#000"></div>
<div class="m13" style="left:754px;top:74px;color:#000">MOTOR</div>
<div class="m13" style="left:754px;top:90px;color:#000">motor</div>
<div style="position:absolute;left:835px;top:76px;width:89px;height:31px;background:#46A0A0;border-top:1px solid #000;border-left:1px solid #000;border-right:1px solid #000"></div>
<div style="position:absolute;left:836px;top:77px;width:87px;height:1px;background:#e8fff8"></div>
<div style="position:absolute;left:836px;top:77px;width:1px;height:29px;background:#e8fff8"></div>
<div class="s11" style="left:894px;top:80px;color:#F0F040;letter-spacing:-0.1px">OB35</div>
<div class="m13" style="left:858px;top:93px;color:#F0F040">4/2</div>
<div style="position:absolute;left:752px;top:106px;width:83px;height:19px;background:#D4D4D4;border:1px solid #000"></div>
<div style="position:absolute;left:753px;top:107px;width:81px;height:1px;background:#fff"></div>
<div style="position:absolute;left:753px;top:107px;width:1px;height:17px;background:#fff"></div>
<div class="m13" style="left:755px;top:111px;">LOCK</div>
<div style="position:absolute;left:752px;top:124px;width:83px;height:19px;background:#D4D4D4;border:1px solid #000"></div>
<div style="position:absolute;left:753px;top:125px;width:81px;height:1px;background:#fff"></div>
<div style="position:absolute;left:753px;top:125px;width:1px;height:17px;background:#fff"></div>
<div class="m13" style="left:755px;top:129px;">LOCK_ON</div>
<div style="position:absolute;left:752px;top:142px;width:83px;height:20px;background:#D4D4D4;border:1px solid #000"></div>
<div style="position:absolute;left:753px;top:143px;width:81px;height:1px;background:#fff"></div>
<div style="position:absolute;left:753px;top:143px;width:1px;height:18px;background:#fff"></div>
<div class="m13" style="left:755px;top:147px;">AUTO_ON</div>
<div style="position:absolute;left:752px;top:161px;width:83px;height:19px;background:#D4D4D4;border:1px solid #000"></div>
<div style="position:absolute;left:753px;top:162px;width:81px;height:1px;background:#fff"></div>
<div style="position:absolute;left:753px;top:162px;width:1px;height:17px;background:#fff"></div>
<div class="m13" style="left:755px;top:166px;">L_RESET</div>
<div style="position:absolute;left:752px;top:179px;width:83px;height:19px;background:#D4D4D4;border:1px solid #000"></div>
<div style="position:absolute;left:753px;top:180px;width:81px;height:1px;background:#fff"></div>
<div style="position:absolute;left:753px;top:180px;width:1px;height:17px;background:#fff"></div>
<div class="m13" style="left:755px;top:184px;">MSS</div>
<div style="position:absolute;left:752px;top:197px;width:83px;height:19px;background:#D4D4D4;border:1px solid #000"></div>
<div style="position:absolute;left:753px;top:198px;width:81px;height:1px;background:#fff"></div>
<div style="position:absolute;left:753px;top:198px;width:1px;height:17px;background:#fff"></div>
<div class="m13" style="left:755px;top:202px;">CSF</div>
<div style="position:absolute;left:752px;top:215px;width:83px;height:19px;background:#D4D4D4;border:1px solid #000"></div>
<div style="position:absolute;left:753px;top:216px;width:81px;height:1px;background:#fff"></div>
<div style="position:absolute;left:753px;top:216px;width:1px;height:17px;background:#fff"></div>
<div class="m13" style="left:755px;top:220px;">FB_ON</div>
<div style="position:absolute;left:752px;top:233px;width:83px;height:19px;background:#D4D4D4;border:1px solid #000"></div>
<div style="position:absolute;left:753px;top:234px;width:81px;height:1px;background:#fff"></div>
<div style="position:absolute;left:753px;top:234px;width:1px;height:17px;background:#fff"></div>
<div class="m13" style="left:755px;top:238px;">QC_FB_ON</div>
<div style="position:absolute;left:752px;top:251px;width:83px;height:20px;background:#D4D4D4;border:1px solid #000"></div>
<div style="position:absolute;left:753px;top:252px;width:81px;height:1px;background:#fff"></div>
<div style="position:absolute;left:753px;top:252px;width:1px;height:18px;background:#fff"></div>
<div class="m13" style="left:755px;top:256px;">QC_QSTAR</div>
<div style="position:absolute;left:752px;top:270px;width:83px;height:19px;background:#D4D4D4;border:1px solid #000"></div>
<div style="position:absolute;left:753px;top:271px;width:81px;height:1px;background:#fff"></div>
<div style="position:absolute;left:753px;top:271px;width:1px;height:17px;background:#fff"></div>
<div class="m13" style="left:755px;top:275px;">LIOP_SEL</div>
<div style="position:absolute;left:752px;top:288px;width:83px;height:19px;background:#D4D4D4;border:1px solid #000"></div>
<div style="position:absolute;left:753px;top:289px;width:81px;height:1px;background:#fff"></div>
<div style="position:absolute;left:753px;top:289px;width:1px;height:17px;background:#fff"></div>
<div class="m13" style="left:755px;top:293px;">AUT_L</div>
<div style="position:absolute;left:842px;top:106px;width:82px;height:19px;background:#D4D4D4;border:1px solid #000"></div>
<div style="position:absolute;left:843px;top:107px;width:80px;height:1px;background:#fff"></div>
<div style="position:absolute;left:843px;top:107px;width:1px;height:17px;background:#fff"></div>
<div class="m13" style="left:870px;top:111px;">QMSS_ST</div>
<div style="position:absolute;left:842px;top:124px;width:82px;height:19px;background:#D4D4D4;border:1px solid #000"></div>
<div style="position:absolute;left:843px;top:125px;width:80px;height:1px;background:#fff"></div>
<div style="position:absolute;left:843px;top:125px;width:1px;height:17px;background:#fff"></div>
<div class="m13" style="left:863px;top:129px;">QMON_ERR</div>
<div style="position:absolute;left:842px;top:142px;width:82px;height:20px;background:#D4D4D4;border:1px solid #000"></div>
<div style="position:absolute;left:843px;top:143px;width:80px;height:1px;background:#fff"></div>
<div style="position:absolute;left:843px;top:143px;width:1px;height:18px;background:#fff"></div>
<div class="m13" style="left:870px;top:147px;">QGR_ERR</div>
<div style="position:absolute;left:842px;top:161px;width:82px;height:19px;background:#D4D4D4;border:1px solid #000"></div>
<div style="position:absolute;left:843px;top:162px;width:80px;height:1px;background:#fff"></div>
<div style="position:absolute;left:843px;top:162px;width:1px;height:17px;background:#fff"></div>
<div class="m13" style="left:891px;top:166px;">QRUN</div>
<div style="position:absolute;left:842px;top:179px;width:82px;height:19px;background:#D4D4D4;border:1px solid #000"></div>
<div style="position:absolute;left:843px;top:180px;width:80px;height:1px;background:#fff"></div>
<div style="position:absolute;left:843px;top:180px;width:1px;height:17px;background:#fff"></div>
<div class="m13" style="left:884px;top:184px;">QSTOP</div>
<div style="position:absolute;left:842px;top:197px;width:82px;height:19px;background:#D4D4D4;border:1px solid #000"></div>
<div style="position:absolute;left:843px;top:198px;width:80px;height:1px;background:#fff"></div>
<div style="position:absolute;left:843px;top:198px;width:1px;height:17px;background:#fff"></div>
<div class="m13" style="left:877px;top:202px;">QSTART</div>
<div style="position:absolute;left:842px;top:215px;width:82px;height:19px;background:#D4D4D4;border:1px solid #000"></div>
<div style="position:absolute;left:843px;top:216px;width:80px;height:1px;background:#fff"></div>
<div style="position:absolute;left:843px;top:216px;width:1px;height:17px;background:#fff"></div>
<div class="m13" style="left:863px;top:220px;">QC_QSTAR</div>
<div style="position:absolute;left:842px;top:233px;width:82px;height:19px;background:#D4D4D4;border:1px solid #000"></div>
<div style="position:absolute;left:843px;top:234px;width:80px;height:1px;background:#fff"></div>
<div style="position:absolute;left:843px;top:234px;width:1px;height:17px;background:#fff"></div>
<div class="m13" style="left:863px;top:238px;">QMAN_AUT</div>
<div style="position:absolute;left:740px;top:115px;width:12px;height:1px;background:#401A1E"></div>
<div class="m13" style="right:627px;top:110px;color:#1A1A5E;text-align:right">0</div>
<div style="position:absolute;left:740px;top:133px;width:12px;height:1px;background:#401A1E"></div>
<div class="m13" style="right:627px;top:128px;color:#1A1A5E;text-align:right">0</div>
<div style="position:absolute;left:740px;top:152px;width:12px;height:1px;background:#401A1E"></div>
<div class="m13" style="right:627px;top:147px;color:#1A1A5E;text-align:right">0</div>
<div style="position:absolute;left:740px;top:170px;width:12px;height:1px;background:#401A1E"></div>
<div class="m13" style="right:627px;top:165px;color:#1A1A5E;text-align:right">0</div>
<div style="position:absolute;left:740px;top:188px;width:12px;height:1px;background:#401A1E"></div>
<div class="m13" style="right:627px;top:183px;color:#1A1A5E;text-align:right">1</div>
<div style="position:absolute;left:740px;top:206px;width:12px;height:1px;background:#401A1E"></div>
<div class="m13" style="right:627px;top:201px;color:#1A1A5E;text-align:right">0</div>
<div style="position:absolute;left:740px;top:242px;width:12px;height:1px;background:#9A9A40"></div>
<div class="m13" style="right:627px;top:237px;color:#1A1A5E;text-align:right">16#80</div>
<div style="position:absolute;left:740px;top:261px;width:12px;height:1px;background:#9A9A40"></div>
<div class="m13" style="right:627px;top:256px;color:#1A1A5E;text-align:right">16#80</div>
<div style="position:absolute;left:740px;top:279px;width:12px;height:1px;background:#401A1E"></div>
<div class="m13" style="right:627px;top:274px;color:#1A1A5E;text-align:right">0</div>
<div style="position:absolute;left:740px;top:297px;width:12px;height:1px;background:#401A1E"></div>
<div class="m13" style="right:627px;top:292px;color:#1A1A5E;text-align:right">0</div>
<div style="position:absolute;left:924px;top:115px;width:13px;height:1px;background:#401A1E"></div>
<div style="position:absolute;left:924px;top:133px;width:13px;height:1px;background:#401A1E"></div>
<div style="position:absolute;left:924px;top:152px;width:13px;height:1px;background:#401A1E"></div>
<div style="position:absolute;left:924px;top:170px;width:13px;height:1px;background:#401A1E"></div>
<div style="position:absolute;left:924px;top:188px;width:13px;height:1px;background:#401A1E"></div>
<div style="position:absolute;left:924px;top:242px;width:13px;height:1px;background:#401A1E"></div>
<div style="position:absolute;left:924px;top:224px;width:13px;height:1px;background:#9A9A40"></div>
<div style="position:absolute;left:1144px;top:143px;width:173px;height:127px;background:#D4D4D4;border:1px solid #000;border-top:none;"></div>
<div style="position:absolute;left:1145px;top:144px;width:1px;height:53px;background:#fff"></div>
<div class="m13" style="left:1146px;top:149px;color:#000">cout</div>
<div class="m13" style="left:1146px;top:165px;color:#000">CH_DO</div>
<div class="m13" style="left:1146px;top:181px;color:#000">Digital</div>
<div style="position:absolute;left:1227px;top:167px;width:90px;height:31px;background:#46A0A0;border-top:1px solid #000;border-left:1px solid #000;border-right:1px solid #000"></div>
<div style="position:absolute;left:1228px;top:168px;width:88px;height:1px;background:#e8fff8"></div>
<div style="position:absolute;left:1228px;top:168px;width:1px;height:29px;background:#e8fff8"></div>
<div class="s11" style="left:1287px;top:171px;color:#F0F040;letter-spacing:-0.1px">OB35</div>
<div class="m13" style="left:1250px;top:184px;color:#F0F040">4/3</div>
<div style="position:absolute;left:1144px;top:197px;width:83px;height:19px;background:#D4D4D4;border:1px solid #000"></div>
<div style="position:absolute;left:1145px;top:198px;width:81px;height:1px;background:#fff"></div>
<div style="position:absolute;left:1145px;top:198px;width:1px;height:17px;background:#fff"></div>
<div class="m13" style="left:1147px;top:202px;">MODE</div>
<div style="position:absolute;left:1144px;top:215px;width:83px;height:19px;background:#D4D4D4;border:1px solid #000"></div>
<div style="position:absolute;left:1145px;top:216px;width:81px;height:1px;background:#fff"></div>
<div style="position:absolute;left:1145px;top:216px;width:1px;height:17px;background:#fff"></div>
<div class="m13" style="left:1147px;top:220px;">I</div>
<div style="position:absolute;left:1144px;top:233px;width:83px;height:19px;background:#D4D4D4;border:1px solid #000"></div>
<div style="position:absolute;left:1145px;top:234px;width:81px;height:1px;background:#fff"></div>
<div style="position:absolute;left:1145px;top:234px;width:1px;height:17px;background:#fff"></div>
<div class="m13" style="left:1147px;top:238px;">SIM_ON</div>
<div style="position:absolute;left:1144px;top:251px;width:83px;height:19px;background:#D4D4D4;border:1px solid #000"></div>
<div style="position:absolute;left:1145px;top:252px;width:81px;height:1px;background:#fff"></div>
<div style="position:absolute;left:1145px;top:252px;width:1px;height:17px;background:#fff"></div>
<div class="m13" style="left:1147px;top:256px;">SIM_I</div>
<div style="position:absolute;left:1234px;top:197px;width:83px;height:19px;background:#D4D4D4;border:1px solid #000"></div>
<div style="position:absolute;left:1235px;top:198px;width:81px;height:1px;background:#fff"></div>
<div style="position:absolute;left:1235px;top:198px;width:1px;height:17px;background:#fff"></div>
<div class="m13" style="left:1284px;top:202px;">QBAD</div>
<div style="position:absolute;left:1234px;top:215px;width:83px;height:19px;background:#D4D4D4;border:1px solid #000"></div>
<div style="position:absolute;left:1235px;top:216px;width:81px;height:1px;background:#fff"></div>
<div style="position:absolute;left:1235px;top:216px;width:1px;height:17px;background:#fff"></div>
<div class="m13" style="left:1277px;top:220px;">VALUE</div>
<div style="position:absolute;left:1234px;top:233px;width:83px;height:19px;background:#D4D4D4;border:1px solid #000"></div>
<div style="position:absolute;left:1235px;top:234px;width:81px;height:1px;background:#fff"></div>
<div style="position:absolute;left:1235px;top:234px;width:1px;height:17px;background:#fff"></div>
<div class="m13" style="left:1263px;top:238px;">QUALITY</div>
<div style="position:absolute;left:1132px;top:206px;width:12px;height:1px;background:#2E7A2E"></div>
<div class="m13" style="right:235px;top:201px;color:#1A1A5E;text-align:right">16#0</div>
<div style="position:absolute;left:1132px;top:242px;width:12px;height:1px;background:#401A1E"></div>
<div class="m13" style="right:235px;top:237px;color:#1A1A5E;text-align:right">0</div>
<div style="position:absolute;left:1132px;top:260px;width:12px;height:1px;background:#401A1E"></div>
<div class="m13" style="right:235px;top:255px;color:#1A1A5E;text-align:right">0</div>
<div style="position:absolute;left:1317px;top:206px;width:13px;height:1px;background:#401A1E"></div>
<div style="position:absolute;left:1317px;top:224px;width:13px;height:1px;background:#401A1E"></div>
<div style="position:absolute;left:1317px;top:242px;width:13px;height:1px;background:#9A9A40"></div>
<div style="position:absolute;left:454px;top:467px;width:172px;height:110px;background:#D4D4D4;border:1px solid #000;"></div>
<div style="position:absolute;left:455px;top:468px;width:170px;height:1px;background:#fff"></div>
<div style="position:absolute;left:455px;top:468px;width:1px;height:54px;background:#fff"></div>
<div class="m13" style="left:456px;top:473px;color:#000">4</div>
<div class="m13" style="left:456px;top:489px;color:#000">SEL_R</div>
<div style="position:absolute;left:537px;top:491px;width:89px;height:32px;background:#46A0A0;border-top:1px solid #000;border-left:1px solid #000;border-right:1px solid #000"></div>
<div style="position:absolute;left:538px;top:492px;width:87px;height:1px;background:#e8fff8"></div>
<div style="position:absolute;left:538px;top:492px;width:1px;height:30px;background:#e8fff8"></div>
<div class="s11" style="left:596px;top:495px;color:#F0F040;letter-spacing:-0.1px">OB35</div>
<div class="m13" style="left:560px;top:508px;color:#F0F040">4/4</div>
<div style="position:absolute;left:454px;top:522px;width:83px;height:19px;background:#D4D4D4;border:1px solid #000"></div>
<div style="position:absolute;left:455px;top:523px;width:81px;height:1px;background:#fff"></div>
<div style="position:absolute;left:455px;top:523px;width:1px;height:17px;background:#fff"></div>
<div class="m13" style="left:457px;top:527px;">K</div>
<div style="position:absolute;left:454px;top:540px;width:83px;height:19px;background:#D4D4D4;border:1px solid #000"></div>
<div style="position:absolute;left:455px;top:541px;width:81px;height:1px;background:#fff"></div>
<div style="position:absolute;left:455px;top:541px;width:1px;height:17px;background:#fff"></div>
<div class="m13" style="left:457px;top:545px;">IN0</div>
<div style="position:absolute;left:454px;top:558px;width:83px;height:19px;background:#D4D4D4;border:1px solid #000"></div>
<div style="position:absolute;left:455px;top:559px;width:81px;height:1px;background:#fff"></div>
<div style="position:absolute;left:455px;top:559px;width:1px;height:17px;background:#fff"></div>
<div class="m13" style="left:457px;top:563px;">IN1</div>
<div style="position:absolute;left:544px;top:522px;width:82px;height:19px;background:#D4D4D4;border:1px solid #000"></div>
<div style="position:absolute;left:545px;top:523px;width:80px;height:1px;background:#fff"></div>
<div style="position:absolute;left:545px;top:523px;width:1px;height:17px;background:#fff"></div>
<div class="m13" style="left:600px;top:527px;">OUT</div>
<div style="position:absolute;left:442px;top:549px;width:12px;height:1px;background:#141450"></div>
<div class="m13" style="right:925px;top:544px;color:#1A1A5E;text-align:right">50.0</div>
<div style="position:absolute;left:442px;top:567px;width:12px;height:1px;background:#141450"></div>
<div class="m13" style="right:925px;top:562px;color:#1A1A5E;text-align:right">-50.0</div>
<div style="position:absolute;left:877px;top:449px;width:173px;height:200px;background:#D4D4D4;border:1px solid #000;"></div>
<div style="position:absolute;left:878px;top:450px;width:171px;height:1px;background:#fff"></div>
<div style="position:absolute;left:878px;top:450px;width:1px;height:54px;background:#fff"></div>
<div class="m13" style="left:879px;top:455px;color:#000">5</div>
<div class="m13" style="left:879px;top:471px;color:#000">INT_P</div>
<div class="m13" style="left:879px;top:487px;color:#000">Integrat</div>
<div style="position:absolute;left:960px;top:473px;width:90px;height:32px;background:#10F040;border-top:1px solid #000;border-left:1px solid #000;border-right:1px solid #000"></div>
<div style="position:absolute;left:961px;top:474px;width:88px;height:1px;background:#e8fff8"></div>
<div style="position:absolute;left:961px;top:474px;width:1px;height:30px;background:#e8fff8"></div>
<div class="s11" style="left:1020px;top:477px;color:#185818;letter-spacing:-0.1px">OB35</div>
<div class="m13" style="left:983px;top:490px;color:#185818">4/5</div>
<div style="position:absolute;left:877px;top:504px;width:83px;height:19px;background:#D4D4D4;border:1px solid #000"></div>
<div style="position:absolute;left:878px;top:505px;width:81px;height:1px;background:#fff"></div>
<div style="position:absolute;left:878px;top:505px;width:1px;height:17px;background:#fff"></div>
<div class="m13" style="left:880px;top:509px;">TI</div>
<div style="position:absolute;left:877px;top:522px;width:83px;height:19px;background:#D4D4D4;border:1px solid #000"></div>
<div style="position:absolute;left:878px;top:523px;width:81px;height:1px;background:#fff"></div>
<div style="position:absolute;left:878px;top:523px;width:1px;height:17px;background:#fff"></div>
<div class="m13" style="left:880px;top:527px;">V_HL</div>
<div style="position:absolute;left:877px;top:540px;width:83px;height:19px;background:#D4D4D4;border:1px solid #000"></div>
<div style="position:absolute;left:878px;top:541px;width:81px;height:1px;background:#fff"></div>
<div style="position:absolute;left:878px;top:541px;width:1px;height:17px;background:#fff"></div>
<div class="m13" style="left:880px;top:545px;">V_LL</div>
<div style="position:absolute;left:877px;top:558px;width:83px;height:19px;background:#D4D4D4;border:1px solid #000"></div>
<div style="position:absolute;left:878px;top:559px;width:81px;height:1px;background:#fff"></div>
<div style="position:absolute;left:878px;top:559px;width:1px;height:17px;background:#fff"></div>
<div class="m13" style="left:880px;top:563px;">U</div>
<div style="position:absolute;left:877px;top:576px;width:83px;height:19px;background:#D4D4D4;border:1px solid #000"></div>
<div style="position:absolute;left:878px;top:577px;width:81px;height:1px;background:#fff"></div>
<div style="position:absolute;left:878px;top:577px;width:1px;height:17px;background:#fff"></div>
<div class="m13" style="left:880px;top:581px;">HYS</div>
<div style="position:absolute;left:877px;top:594px;width:83px;height:19px;background:#D4D4D4;border:1px solid #000"></div>
<div style="position:absolute;left:878px;top:595px;width:81px;height:1px;background:#fff"></div>
<div style="position:absolute;left:878px;top:595px;width:1px;height:17px;background:#fff"></div>
<div class="m13" style="left:880px;top:599px;">VTRACK</div>
<div style="position:absolute;left:877px;top:612px;width:83px;height:19px;background:#D4D4D4;border:1px solid #000"></div>
<div style="position:absolute;left:878px;top:613px;width:81px;height:1px;background:#fff"></div>
<div style="position:absolute;left:878px;top:613px;width:1px;height:17px;background:#fff"></div>
<div class="m13" style="left:880px;top:617px;">TRACK</div>
<div style="position:absolute;left:877px;top:630px;width:83px;height:19px;background:#D4D4D4;border:1px solid #000"></div>
<div style="position:absolute;left:878px;top:631px;width:81px;height:1px;background:#fff"></div>
<div style="position:absolute;left:878px;top:631px;width:1px;height:17px;background:#fff"></div>
<div class="m13" style="left:880px;top:635px;">HOLD</div>
<div style="position:absolute;left:967px;top:504px;width:83px;height:19px;background:#D4D4D4;border:1px solid #000"></div>
<div style="position:absolute;left:968px;top:505px;width:81px;height:1px;background:#fff"></div>
<div style="position:absolute;left:968px;top:505px;width:1px;height:17px;background:#fff"></div>
<div class="m13" style="left:1017px;top:509px;">QVHL</div>
<div style="position:absolute;left:967px;top:522px;width:83px;height:19px;background:#D4D4D4;border:1px solid #000"></div>
<div style="position:absolute;left:968px;top:523px;width:81px;height:1px;background:#fff"></div>
<div style="position:absolute;left:968px;top:523px;width:1px;height:17px;background:#fff"></div>
<div class="m13" style="left:1017px;top:527px;">QVLL</div>
<div style="position:absolute;left:967px;top:540px;width:83px;height:19px;background:#D4D4D4;border:1px solid #000"></div>
<div style="position:absolute;left:968px;top:541px;width:81px;height:1px;background:#fff"></div>
<div style="position:absolute;left:968px;top:541px;width:1px;height:17px;background:#fff"></div>
<div class="m13" style="left:1038px;top:545px;">V</div>
<div style="position:absolute;left:865px;top:513px;width:12px;height:1px;background:#141450"></div>
<div class="m13" style="right:502px;top:508px;color:#1A1A5E;text-align:right">1.0</div>
<div style="position:absolute;left:865px;top:531px;width:12px;height:1px;background:#141450"></div>
<div class="m13" style="right:502px;top:526px;color:#1A1A5E;text-align:right">100.0</div>
<div style="position:absolute;left:865px;top:549px;width:12px;height:1px;background:#141450"></div>
<div class="m13" style="right:502px;top:544px;color:#1A1A5E;text-align:right">0.0</div>
<div style="position:absolute;left:865px;top:585px;width:12px;height:1px;background:#141450"></div>
<div class="m13" style="right:502px;top:580px;color:#1A1A5E;text-align:right">1.0</div>
<div style="position:absolute;left:865px;top:603px;width:12px;height:1px;background:#141450"></div>
<div class="m13" style="right:502px;top:598px;color:#1A1A5E;text-align:right">0.0</div>
<div style="position:absolute;left:865px;top:621px;width:12px;height:1px;background:#401A1E"></div>
<div class="m13" style="right:502px;top:616px;color:#1A1A5E;text-align:right">0</div>
<div style="position:absolute;left:865px;top:639px;width:12px;height:1px;background:#401A1E"></div>
<div class="m13" style="right:502px;top:634px;color:#1A1A5E;text-align:right">0</div>
<div style="position:absolute;left:1050px;top:531px;width:13px;height:1px;background:#401A1E"></div>
<div style="position:absolute;left:1050px;top:549px;width:13px;height:1px;background:#141450"></div>
<div class="s12" style="left:726px;top:308px;color:#1A1A5E">开</div>
<div class="m13" style="right:626px;top:327px;color:#1A1A5E">3.0</div>
<div style="left:748px;top:295px;width:222px;height:60px;background:#FFFFC8;border:1px solid #000"></div>
<div class="m12" style="left:750px;top:299px;">LIOP_SEL</div>
<div class="m12" style="left:750px;top:313px;">IN - BOOL</div>
<div class="m12" style="left:750px;top:327px;">0</div>
<div class="m12" style="left:750px;top:341px;">Select: 1=Linking, 0=Operator Active</div>
</div></div>
<div style="position:absolute;left:1347px;top:78px;width:16px;height:622px;background:#F5F4EE;border-left:1px solid #EEEDE5"></div>
<div style="position:absolute;left:1363px;top:77px;width:3px;height:640px;background:#ECE9D8"></div>
<div style="left:1348px;top:79px;width:15px;height:16px;border:1px solid #B8CCF4;border-radius:2px;background:linear-gradient(135deg,#DCE6FE,#B6CAF8)"></div>
<svg style="position:absolute;left:1348px;top:81px;" width="14" height="12" viewBox="0 0 14 12" shape-rendering="crispEdges"><path d="M3 8 L7 4 L11 8" fill="none" stroke="#4D6185" stroke-width="2.2"/></svg>
<div style="left:1348px;top:683px;width:15px;height:16px;border:1px solid #B8CCF4;border-radius:2px;background:linear-gradient(135deg,#DCE6FE,#B6CAF8)"></div>
<svg style="position:absolute;left:1348px;top:685px;" width="14" height="12" viewBox="0 0 14 12" shape-rendering="crispEdges"><path d="M3 4 L7 8 L11 4" fill="none" stroke="#4D6185" stroke-width="2.2"/></svg>
<div style="left:1348px;top:159px;width:15px;height:337px;border:1px solid #B8CCF4;border-radius:2px;background:linear-gradient(to right,#C8D6FC,#BCCDFA)"></div>
<div style="position:absolute;left:1352px;top:323px;width:7px;height:1px;background:#EEF4FE"></div>
<div style="position:absolute;left:1353px;top:324px;width:7px;height:1px;background:#8CA6DC"></div>
<div style="position:absolute;left:1352px;top:325px;width:7px;height:1px;background:#EEF4FE"></div>
<div style="position:absolute;left:1353px;top:326px;width:7px;height:1px;background:#8CA6DC"></div>
<div style="position:absolute;left:1352px;top:327px;width:7px;height:1px;background:#EEF4FE"></div>
<div style="position:absolute;left:1353px;top:328px;width:7px;height:1px;background:#8CA6DC"></div>
<div style="position:absolute;left:1352px;top:329px;width:7px;height:1px;background:#EEF4FE"></div>
<div style="position:absolute;left:1353px;top:330px;width:7px;height:1px;background:#8CA6DC"></div>
<div style="position:absolute;left:207px;top:700px;width:1141px;height:17px;background:#ECE9D8"></div>
<div style="left:300px;top:700px;width:1048px;height:17px;background:repeating-conic-gradient(#F4F3EE 0 25%,#E0DED4 0 50%) 0 0/2px 2px"></div>
<div style="position:absolute;left:208px;top:700px;width:18px;height:16px;background:#ECE9D8;border:1px solid #000;border-top-color:#000;border-left-color:#fff;border-right-color:#000"></div>
<div style="position:absolute;left:226px;top:700px;width:17px;height:16px;background:#ECE9D8;border:1px solid #000;border-left-color:#fff"></div>
<svg style="position:absolute;left:212px;top:703px;" width="10" height="10" viewBox="0 0 10 10" shape-rendering="crispEdges"><path d="M8 1 L3 5 L8 9 Z" fill="#A8A698"/></svg>
<svg style="position:absolute;left:230px;top:703px;" width="10" height="10" viewBox="0 0 10 10" shape-rendering="crispEdges"><path d="M2 1 L7 5 L2 9 Z" fill="#A8A698"/></svg>
<svg style="position:absolute;left:243px;top:700px;" width="42" height="17" viewBox="0 0 42 17" shape-rendering="crispEdges"><path d="M0.5 0 L8 15.5 H23 L30.5 0 Z" fill="#fff"/><path d="M0.5 0 L8 15.5 H23 L30.5 0.5 H35.5 V16" fill="none" stroke="#000" stroke-width="1.2" shape-rendering="auto"/><path d="M39.5 0 V16" stroke="#000"/></svg>
<div style="left:252px;top:702px;font-family:'Liberation Sans',sans-serif;font-weight:bold;font-size:13px;line-height:13px">A</div>
<div style="position:absolute;left:284px;top:700px;width:17px;height:16px;background:#ECE9D8;border:1px solid #fff;border-right-color:#8E8B7E;border-bottom-color:#8E8B7E"></div>
<svg style="position:absolute;left:288px;top:703px;" width="10" height="10" viewBox="0 0 10 10" shape-rendering="crispEdges"><path d="M6 1 L2 5 L6 9 Z" fill="#000"/></svg>
<div style="position:absolute;left:559px;top:701px;width:457px;height:15px;background:#ECE9D8;border:1px solid #fff;border-right-color:#8E8B7E;border-bottom-color:#8E8B7E"></div>
<div style="position:absolute;left:1348px;top:701px;width:15px;height:15px;background:#ECE9D8;border:1px solid #fff;border-right-color:#8E8B7E;border-bottom-color:#8E8B7E"></div>
<svg style="position:absolute;left:1351px;top:703px;" width="10" height="10" viewBox="0 0 10 10" shape-rendering="crispEdges"><path d="M3 1 L7 5 L3 9 Z" fill="#000"/></svg>
<div style="position:absolute;left:0px;top:716px;width:1366px;height:1px;background:#fff"></div>
<div style="position:absolute;left:0px;top:717px;width:1366px;height:21px;background:#ECE9D8"></div>
<div class="s12" style="left:2px;top:722px">按</div>
<div class="m12" style="left:20px;top:723px">F1</div>
<div class="s12" style="left:40px;top:722px">键打开帮助。</div>
<div style="position:absolute;left:912px;top:719px;width:125px;height:18px;background:#ECE9D8;border:1px solid #fff;border-top-color:#A8A598;border-left-color:#A8A598"></div>
<div style="position:absolute;left:1040px;top:719px;width:83px;height:18px;background:#ECE9D8;border:1px solid #fff;border-top-color:#A8A598;border-left-color:#A8A598"></div>
<div style="position:absolute;left:1126px;top:719px;width:240px;height:18px;background:#fff;border:1px solid #fff;border-top-color:#A8A598;border-left-color:#A8A598"></div>
<div class="m12" style="left:916px;top:723px">---</div>
<div class="m12" style="left:1042px;top:723px">A/</div><div class="s12" style="left:1054px;top:722px">表单</div><div class="m12" style="left:1078px;top:723px"> 1</div>
<div class="m12" style="left:1128px;top:723px">OB35  type_motor1  type_motor1\5</div>
<div style="left:0;top:738px;width:1366px;height:30px;background:linear-gradient(to bottom,#3168D5 0px,#4993E6 2px,#2F71E0 4px,#245DDB 9px,#2157D7 24px,#1941A5 30px)"></div>
<div style="left:0;top:738px;width:96px;height:30px;border-radius:0 10px 10px 0;background:linear-gradient(to bottom,#3C913C 0px,#5EB25E 3px,#3A9A3A 8px,#3A9A3A 22px,#2A7A2A 30px)"></div>
<svg style="position:absolute;left:9px;top:743px;" width="22" height="22" viewBox="0 0 22 22" shape-rendering="crispEdges"><path d="M1 3 Q5 1 10 3 V10 Q5 8 1 10 Z" fill="#F05020"/><path d="M11 3 Q16 1 21 3 V10 Q16 8 11 10 Z" fill="#40B030"/><path d="M1 12 Q5 10 10 12 V19 Q5 17 1 19 Z" fill="#2070E0"/><path d="M11 12 Q16 10 21 12 V19 Q16 17 11 19 Z" fill="#F0C020"/></svg>
<div style="left:37px;top:743px;font-family:'Liberation Sans',sans-serif;font-style:italic;font-size:19px;line-height:22px;color:#fff;text-shadow:1px 1px 0 rgba(20,60,20,0.6)">开始</div>
<svg style="position:absolute;left:107px;top:743px;" width="20" height="20" viewBox="0 0 20 20" shape-rendering="crispEdges"><g shape-rendering="auto"><circle cx="10" cy="10.5" r="6.5" fill="#2A7BE0"/><circle cx="10" cy="10.5" r="3.8" fill="#fff"/><rect x="5" y="9.5" width="10" height="2.2" fill="#2A7BE0"/><rect x="10" y="12" width="7" height="3" fill="#2A7BE0"/><path d="M2 17 Q1 10 9 5 Q16 1 18 3" fill="none" stroke="#F0B030" stroke-width="1.6"/></g></svg>
<svg style="position:absolute;left:130px;top:744px;" width="18" height="18" viewBox="0 0 18 18" shape-rendering="crispEdges"><g shape-rendering="auto"><rect x="2" y="2" width="14" height="14" rx="3" fill="#fff" stroke="#2060C0" stroke-width="1.5"/><path d="M5 12 L11 6 M8 6 H11 V9" stroke="#2060C0" stroke-width="1.8" fill="none"/><circle cx="6" cy="6" r="1.5" fill="#2060C0"/></g></svg>
<div style="left:191px;top:741px;width:158px;height:24px;border-radius:3px;background:linear-gradient(to bottom,#5A9CF8 0px,#3D85F0 3px,#3A81EE 24px,#2F6FDA 29px)"></div>
<div style="left:350px;top:741px;width:159px;height:24px;border-radius:3px;background:linear-gradient(to bottom,#1A47A8 0px,#1E52B7 4px,#1E52B7 26px,#1A48A8 30px)"></div>
<div style="left:511px;top:741px;width:157px;height:24px;border-radius:3px;background:linear-gradient(to bottom,#5A9CF8 0px,#3D85F0 3px,#3A81EE 24px,#2F6FDA 29px)"></div>
<div style="left:671px;top:741px;width:157px;height:24px;border-radius:3px;background:linear-gradient(to bottom,#5A9CF8 0px,#3D85F0 3px,#3A81EE 24px,#2F6FDA 29px)"></div>
<svg style="position:absolute;left:200px;top:745px;" width="16" height="16" viewBox="0 0 16 16" shape-rendering="crispEdges"><rect x="0.5" y="0.5" width="15" height="15" fill="#C8C0B8" stroke="#303030"/><path d="M2 10 Q5 3 11 3 L9 7 Q6 8 4 13 Z" fill="#000"/><path d="M11 6 L13 9 L11 12" stroke="#20C0E0" stroke-width="2" fill="none"/></svg>
<div class="m12" style="left:220px;top:748px;color:#fff">SIMATIC Manager ...</div>
<svg style="position:absolute;left:361px;top:746px;" width="16" height="16" viewBox="0 0 16 16" shape-rendering="crispEdges"><rect x="0" y="0" width="16" height="16" fill="#F4F4F0"/><rect x="2" y="1" width="4" height="6" fill="#A8A4B0"/><rect x="2" y="9" width="4" height="6" fill="#A8A4B0"/><path d="M0 1.5 H2 M0 5.5 H2 M0 9.5 H2 M0 13.5 H2" stroke="#000"/><path d="M5.5 1 V6.5 H13.5 V12 M5.5 9 V15" stroke="#000" fill="none"/><path d="M7 7.5 H11 L9 11 Z" fill="#000"/><path d="M9 12 L12 9 L16 13 L13 16 Z" fill="#E8C850"/><path d="M10.5 11.5 L14 15 M12 10 L15.5 13.5" stroke="#8A2000" stroke-width="1.2"/></svg>
<div class="m12" style="left:381px;top:748px;color:#fff">CFC - [type_moto...</div>
<svg style="position:absolute;left:520px;top:744px;" width="16" height="20" viewBox="0 0 16 20" shape-rendering="crispEdges"><path d="M3 6 L13 6 L11 18 L5 18 Z" fill="#A0C0E0" stroke="#604020"/><path d="M4 1 L6 8 M8 0 L8 8 M12 1 L10 8" stroke="#E0A020" stroke-width="1.5"/></svg>
<div class="s12" style="left:541px;top:747px;color:#fff">未命名 - 画图</div>
<svg style="position:absolute;left:679px;top:746px;" width="17" height="14" viewBox="0 0 17 14" shape-rendering="crispEdges"><path d="M0.5 2.5 H6 L7 4 H15.5 V13.5 H0.5 Z" fill="#F0D060" stroke="#806020"/><path d="M0.5 13.5 L2.5 6.5 H16.5 L14.5 13.5 Z" fill="#F8E890" stroke="#806020"/></svg>
<div class="m12" style="left:700px;top:748px;color:#fff">Z:\360Downloads</div>
<div style="left:1199px;top:738px;width:167px;height:30px;background:linear-gradient(to bottom,#1290E8 0px,#19A0F4 3px,#0F8EE8 26px,#0C76D0 30px);border-left:1px solid #1050B0"></div>
<svg style="position:absolute;left:1164px;top:747px;" width="17" height="14" viewBox="0 0 17 14" shape-rendering="crispEdges"><rect x="0.5" y="3.5" width="15" height="10" fill="#202020" stroke="#101010"/><path d="M2 6 H15 M2 8.5 H15 M2 11 H15" stroke="#fff" stroke-width="1.4" stroke-dasharray="1.2 0.8"/><path d="M4 0.5 H12" stroke="#606060" stroke-dasharray="1 1"/></svg>
<div style="left:1190px;top:744px;width:18px;height:18px;border-radius:50%;background:radial-gradient(circle at 40% 35%,#A8D0FF,#3A80E0);border:1px solid #80B0F0"></div>
<svg style="position:absolute;left:1193px;top:747px;" width="12" height="12" viewBox="0 0 12 12" shape-rendering="crispEdges"><path d="M7 2 L3 6 L7 10" stroke="#fff" stroke-width="2.2" fill="none"/></svg>
<svg style="position:absolute;left:1210px;top:746px;" width="16" height="16" viewBox="0 0 16 16" shape-rendering="crispEdges"><rect x="0" y="0" width="7" height="15" fill="#000"/><rect x="8" y="0" width="7" height="7" fill="#000"/><rect x="1.5" y="2" width="4" height="3" fill="#fff"/><rect x="9.5" y="2" width="4" height="3" fill="#fff"/><rect x="1.5" y="9" width="3" height="4" fill="#fff"/><rect x="6.5" y="6.5" width="9" height="9" fill="#108010" stroke="#fff"/></svg>
<svg style="position:absolute;left:1228px;top:746px;" width="16" height="16" viewBox="0 0 16 16" shape-rendering="crispEdges"><path d="M0 4 H9 M3 2 H12" stroke="#30A030" stroke-width="2"/><rect x="0" y="6" width="9" height="3" fill="#000"/><rect x="1" y="7" width="7" height="1" fill="#ddd"/><path d="M11 0 L13 2" stroke="#40C0F0" stroke-width="2"/><rect x="6.5" y="6.5" width="9" height="9" fill="#108010" stroke="#fff"/></svg>
<svg style="position:absolute;left:1246px;top:746px;" width="16" height="16" viewBox="0 0 16 16" shape-rendering="crispEdges"><path d="M0 15 V6 L4 3 V1 M4 6 L8 3" stroke="#000" fill="#B8B0A0"/><rect x="0" y="8" width="7" height="7" fill="#B8B0A0"/><path d="M10 3 L13 1" stroke="#fff"/><rect x="6.5" y="6.5" width="9" height="9" fill="#108010" stroke="#fff"/></svg>
<svg style="position:absolute;left:1264px;top:745px;" width="14" height="14" viewBox="0 0 14 14" shape-rendering="crispEdges"><rect x="0" y="0" width="14" height="14" fill="#A89C88"/><text x="0.5" y="11" font-family="Liberation Sans" font-weight="bold" font-size="10" fill="#fff">Vm</text></svg>
<svg style="position:absolute;left:1281px;top:744px;" width="17" height="18" viewBox="0 0 17 18" shape-rendering="crispEdges"><path d="M0 0 L5 5 M5 0 L0 5" stroke="#000" stroke-width="1.5"/><path d="M4 17 L16 6 L10 15 Z" fill="#E09030"/><path d="M4 17 L16 6 L8 9 Z" fill="#A0A8B8"/></svg>
<svg style="position:absolute;left:1299px;top:744px;" width="18" height="18" viewBox="0 0 18 18" shape-rendering="crispEdges"><rect x="1" y="1" width="6" height="7" fill="#1a1a9a"/><path d="M3 2 V6 M5 2 V6" stroke="#fff"/><rect x="1" y="10" width="6" height="7" fill="#1a1a9a"/><rect x="11" y="1" width="6" height="6" fill="#902040"/><path d="M7 9 H17" stroke="#000" stroke-width="1.5"/><path d="M9 10 L14 17" stroke="#E08020" stroke-width="2"/></svg>
<div style="left:1326px;top:746px;font-family:'Liberation Sans',sans-serif;font-size:12px;line-height:14px;color:#fff">8:21</div>
<svg style="position:absolute;left:0;top:0" width="1366" height="768"><polyline points="559,25 468,75 443,88 408,109" fill="none" stroke="#000" stroke-width="1"/><polyline points="612,160 635,183 658,199 700,234 724,254" fill="none" stroke="#000" stroke-width="1"/></svg>
</body></html>
